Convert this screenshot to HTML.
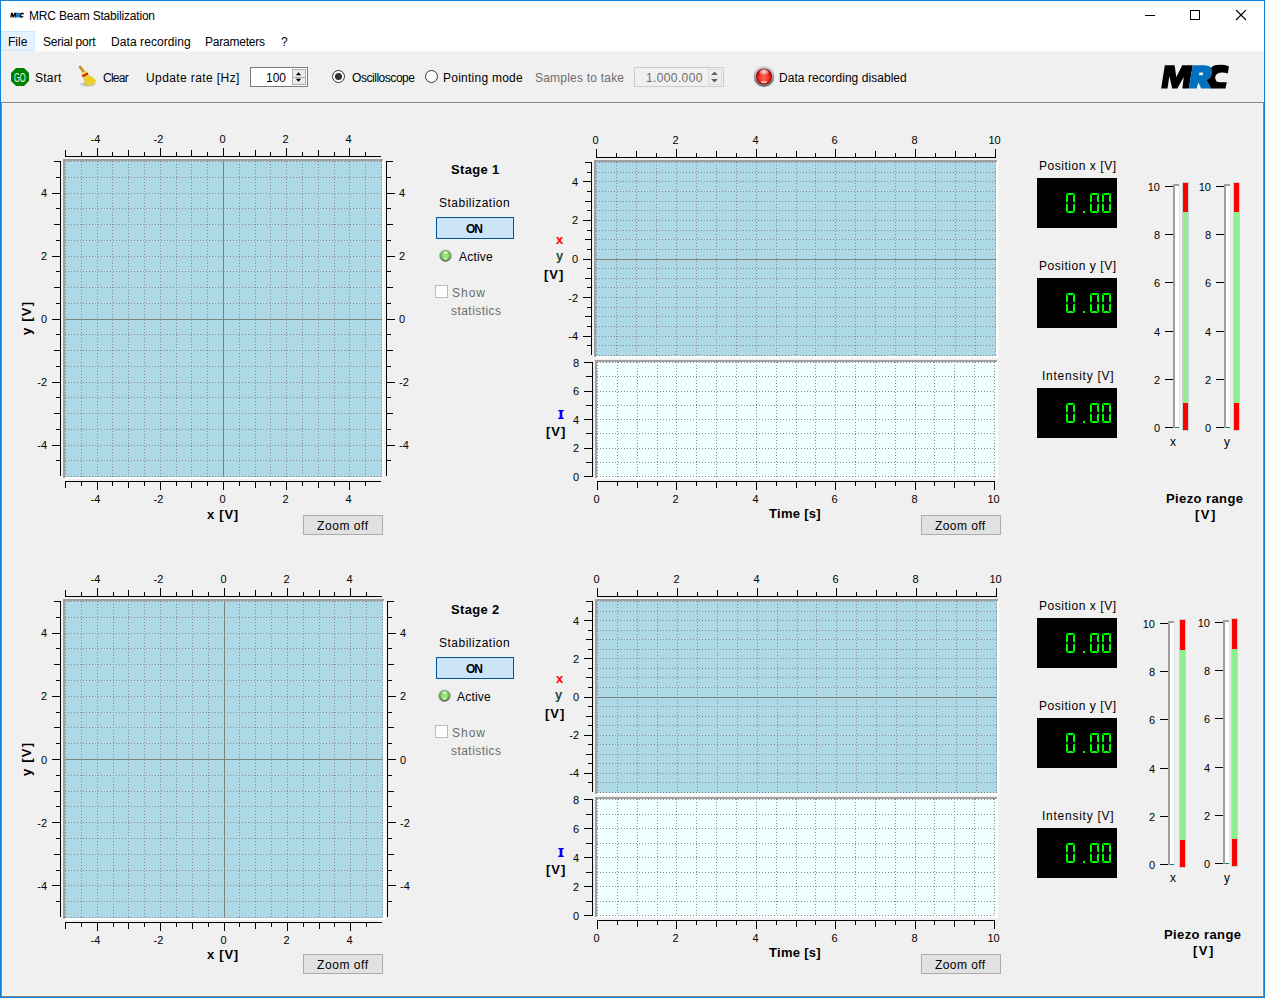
<!DOCTYPE html>
<html><head><meta charset="utf-8"><title>MRC Beam Stabilization</title>
<style>
html,body{margin:0;padding:0;background:#f0f0f0;overflow:hidden;}
svg{display:block;font-family:"Liberation Sans", sans-serif;}
rect{shape-rendering:crispEdges;}
line{shape-rendering:crispEdges;}
</style></head><body>
<svg width="1265" height="998" viewBox="0 0 1265 998">
<defs><radialGradient id="gred" cx="50%" cy="60%" r="55%"><stop offset="0" stop-color="#ff6a5a"/><stop offset="0.7" stop-color="#ee2a1a"/><stop offset="1" stop-color="#b00000"/></radialGradient><radialGradient id="ghi" cx="50%" cy="40%" r="60%"><stop offset="0" stop-color="#ffffff" stop-opacity="0.95"/><stop offset="1" stop-color="#ffffff" stop-opacity="0.1"/></radialGradient><linearGradient id="gbez" x1="0" y1="0" x2="0" y2="1"><stop offset="0" stop-color="#d8d8d8"/><stop offset="1" stop-color="#6e6e6e"/></linearGradient><linearGradient id="gbez2" x1="0" y1="0" x2="0" y2="1"><stop offset="0" stop-color="#e6e6e6"/><stop offset="0.5" stop-color="#b0b0b0"/><stop offset="1" stop-color="#5e5e5e"/></linearGradient><radialGradient id="gled" cx="50%" cy="55%" r="55%"><stop offset="0" stop-color="#a6e68c"/><stop offset="0.7" stop-color="#86dc5e"/><stop offset="1" stop-color="#5cb83a"/></radialGradient><radialGradient id="gshadow" cx="50%" cy="50%" r="50%"><stop offset="0" stop-color="#8a8a8a"/><stop offset="1" stop-color="#8a8a8a" stop-opacity="0"/></radialGradient></defs>
<rect x="0" y="0" width="1265" height="998" fill="#1081dc" />
<rect x="1" y="1" width="1263" height="996" fill="#f0f0f0" />
<rect x="1" y="1" width="1263" height="50" fill="#ffffff" />
<rect x="1" y="51" width="1263" height="1" fill="#f4f4f4" />
<g transform="translate(10,12.5) scale(0.2)"><path d="M1.2,24.6 L4.8,1.2 L14.6,1.2 L16.3,12.9 L22.3,1.2 L32.8,1.2 L28.8,24.6 L22.3,24.6 L23.8,12.9 L17.3,24.6 L12.2,24.6 L9.4,11.9 L7.5,24.6 Z" fill="#000"/><path d="M28.8,24.6 L32.8,1.2 L44,1.2 Q49.5,1.2 51,3.7 Q52.6,7.5 51,12.2 Q49.5,15 46.5,15.7 L51,24.6 L41.2,24.6 L38.3,18.2 L36.7,24.6 Z M39.3,8.4 L43.1,8.4 L42.8,11.3 L39,11.3 Z" fill="#0070c0" fill-rule="evenodd"/><path d="M51,3.7 Q53,1.2 56.5,1 L62,0.7 Q66,0.8 69,2.4 L67.7,9.4 Q65,8.3 62,8.4 Q57.5,8.6 56,11 Q55,12.5 55.2,14.2 Q55.6,17.3 58,18 Q60,18.3 66.8,18.2 L65.5,24.6 L51,24.6 L46.5,15.7 Q49.5,15 51,12.2 Q52.6,7.5 51,3.7 Z" fill="#000"/></g>
<text x="29" y="20" font-size="12" fill="#000" textLength="126.06" lengthAdjust="spacing" >MRC Beam Stabilization</text>
<rect x="1145" y="15" width="10" height="1" fill="#000" />
<rect x="1190.5" y="10.5" width="9" height="9" fill="none" stroke="#000" stroke-width="1"/>
<path d="M1236,10 L1246,20 M1246,10 L1236,20" stroke="#000" stroke-width="1.1" fill="none"/>
<rect x="1" y="31" width="34" height="20" fill="#cce8ff" />
<rect x="2" y="32" width="32" height="18" fill="#e5f3ff" />
<text x="8" y="46" font-size="12" fill="#000" textLength="19.34" lengthAdjust="spacing" >File</text>
<text x="43" y="46" font-size="12" fill="#000" textLength="52.70" lengthAdjust="spacing" >Serial port</text>
<text x="111" y="46" font-size="12" fill="#000" textLength="79.72" lengthAdjust="spacing" >Data recording</text>
<text x="205" y="46" font-size="12" fill="#000" textLength="60.03" lengthAdjust="spacing" >Parameters</text>
<text x="281" y="46" font-size="12" fill="#000" textLength="4.69" lengthAdjust="spacing" >?</text>
<rect x="1" y="102" width="1263" height="1" fill="#7f858c" />
<rect x="1" y="102" width="1" height="895" fill="#7f858c" />
<rect x="2" y="103" width="1261" height="1" fill="#f8f8f8" />
<rect x="2" y="103" width="1" height="893" fill="#f8f8f8" />
<rect x="1263" y="102" width="1" height="895" fill="#7f858c" />
<rect x="1262" y="103" width="1" height="893" fill="#f8f8f8" />
<rect x="1" y="996" width="1263" height="1" fill="#7f858c" />
<rect x="2" y="995" width="1261" height="1" fill="#f8f8f8" />
<polygon points="16,68 24,68 29,73 29,81 24,86 16,86 11,81 11,73" fill="#008000"/>
<text x="0" y="0" font-size="13.5" fill="#e8f8e8" text-anchor="middle" transform="translate(19.8,82) scale(0.56,1)">GO</text>
<text x="35" y="82" font-size="12" fill="#000" textLength="26.34" lengthAdjust="spacing" >Start</text>
<ellipse cx="88" cy="84.3" rx="9" ry="2.8" fill="url(#gshadow)"/><path d="M78.6,67.2 Q79,65.4 80.8,65.8 L85.2,71.6 L83.2,73.2 Z" fill="#c98a2e"/><ellipse cx="84.3" cy="73.4" rx="3.6" ry="1.7" transform="rotate(-28 84.3 73.4)" fill="#f2dc48"/><path d="M81.8,75.6 L87.4,72.6 L88.6,74.6 L83,77.6 Z" fill="#d41a1a"/><path d="M83,77.4 L88.6,74.6 Q93,77.5 96.4,80.6 Q95.5,82.6 94.4,83.4 Q90,85.4 86.6,86 Q85,83 83,77.4 Z" fill="#f0d22c"/><path d="M85,79 L88,85 M87,78 L91,84.5 M89,77 L94,82.5" stroke="#e2b820" stroke-width="0.6" fill="none"/>
<text x="103" y="82" font-size="12" fill="#000" textLength="25.69" lengthAdjust="spacing" >Clear</text>
<text x="146" y="82" font-size="12" fill="#000" textLength="93.38" lengthAdjust="spacing" >Update rate [Hz]</text>
<rect x="250" y="67" width="58" height="20" fill="#7a7a7a" />
<rect x="251" y="68" width="56" height="18" fill="#ffffff" />
<text x="266" y="82" font-size="12" fill="#000" textLength="20.03" lengthAdjust="spacing" >100</text>
<rect x="292" y="69" width="14" height="16" fill="#adadad" />
<rect x="293" y="70" width="12" height="7" fill="#ececec" />
<rect x="293" y="78" width="12" height="6" fill="#ececec" />
<polygon points="295.8,75.2 301.2,75.2 298.5,72.2" fill="#000"/>
<polygon points="295.8,78.8 301.2,78.8 298.5,81.8" fill="#000"/>
<circle cx="338.5" cy="76.5" r="6" fill="#fff" stroke="#333" stroke-width="1"/>
<circle cx="338.5" cy="76.5" r="3.5" fill="#333"/>
<text x="352" y="82" font-size="12" fill="#000" textLength="63.03" lengthAdjust="spacing" >Oscilloscope</text>
<circle cx="431.5" cy="76.5" r="6" fill="#fff" stroke="#333" stroke-width="1"/>
<text x="443" y="82" font-size="12" fill="#000" textLength="79.72" lengthAdjust="spacing" >Pointing mode</text>
<text x="535" y="82" font-size="12" fill="#6d6d6d" textLength="89.05" lengthAdjust="spacing" >Samples to take</text>
<rect x="634" y="67" width="90" height="20" fill="#cccccc" />
<rect x="635" y="68" width="88" height="18" fill="#f0f0f0" />
<text x="646" y="82" font-size="12" fill="#6d6d6d" textLength="56.39" lengthAdjust="spacing" >1.000.000</text>
<rect x="708" y="69" width="14" height="16" fill="#dcdcdc" />
<rect x="709" y="70" width="12" height="7" fill="#f0f0f0" />
<rect x="709" y="78" width="12" height="6" fill="#f0f0f0" />
<polygon points="714.5,71.5 718,75 711,75" fill="#606060"/>
<polygon points="711,79 718,79 714.5,82.5" fill="#606060"/>
<circle cx="764" cy="76.5" r="10.5" fill="url(#gbez)"/>
<circle cx="764" cy="76.5" r="8" fill="#8b0000"/>
<circle cx="764" cy="76.5" r="7.2" fill="url(#gred)"/>
<ellipse cx="764" cy="72.2" rx="5" ry="3.2" fill="url(#ghi)"/>
<ellipse cx="764" cy="82" rx="3.2" ry="1.3" fill="#ffd8c8" opacity="0.75"/>
<text x="779" y="82" font-size="12" fill="#000" textLength="127.75" lengthAdjust="spacing" >Data recording disabled</text>
<g transform="translate(1160,64)"><path d="M1.2,24.6 L4.8,1.2 L14.6,1.2 L16.3,12.9 L22.3,1.2 L32.8,1.2 L28.8,24.6 L22.3,24.6 L23.8,12.9 L17.3,24.6 L12.2,24.6 L9.4,11.9 L7.5,24.6 Z" fill="#000"/><path d="M28.8,24.6 L32.8,1.2 L44,1.2 Q49.5,1.2 51,3.7 Q52.6,7.5 51,12.2 Q49.5,15 46.5,15.7 L51,24.6 L41.2,24.6 L38.3,18.2 L36.7,24.6 Z M39.3,8.4 L43.1,8.4 L42.8,11.3 L39,11.3 Z" fill="#0070c0" fill-rule="evenodd"/><path d="M51,3.7 Q53,1.2 56.5,1 L62,0.7 Q66,0.8 69,2.4 L67.7,9.4 Q65,8.3 62,8.4 Q57.5,8.6 56,11 Q55,12.5 55.2,14.2 Q55.6,17.3 58,18 Q60,18.3 66.8,18.2 L65.5,24.6 L51,24.6 L46.5,15.7 Q49.5,15 51,12.2 Q52.6,7.5 51,3.7 Z" fill="#000"/></g>
<rect x="63" y="159" width="321" height="320" fill="#ffffff" />
<rect x="63" y="159" width="320" height="2" fill="#a0a0a0" />
<rect x="63" y="159" width="2" height="319" fill="#a0a0a0" />
<rect x="65" y="161" width="317" height="316" fill="#add8e6" />
<line x1="65.5" y1="161" x2="65.5" y2="477" stroke="#8e8989" stroke-width="1" stroke-dasharray="1 2"/>
<line x1="81.5" y1="161" x2="81.5" y2="477" stroke="#8e8989" stroke-width="1" stroke-dasharray="1 2"/>
<line x1="97.5" y1="161" x2="97.5" y2="477" stroke="#8e8989" stroke-width="1" stroke-dasharray="1 2"/>
<line x1="112.5" y1="161" x2="112.5" y2="477" stroke="#8e8989" stroke-width="1" stroke-dasharray="1 2"/>
<line x1="128.5" y1="161" x2="128.5" y2="477" stroke="#8e8989" stroke-width="1" stroke-dasharray="1 2"/>
<line x1="144.5" y1="161" x2="144.5" y2="477" stroke="#8e8989" stroke-width="1" stroke-dasharray="1 2"/>
<line x1="160.5" y1="161" x2="160.5" y2="477" stroke="#8e8989" stroke-width="1" stroke-dasharray="1 2"/>
<line x1="176.5" y1="161" x2="176.5" y2="477" stroke="#8e8989" stroke-width="1" stroke-dasharray="1 2"/>
<line x1="191.5" y1="161" x2="191.5" y2="477" stroke="#8e8989" stroke-width="1" stroke-dasharray="1 2"/>
<line x1="207.5" y1="161" x2="207.5" y2="477" stroke="#8e8989" stroke-width="1" stroke-dasharray="1 2"/>
<line x1="223.5" y1="161" x2="223.5" y2="477" stroke="#8e8989" stroke-width="1" stroke-dasharray="1 2"/>
<line x1="239.5" y1="161" x2="239.5" y2="477" stroke="#8e8989" stroke-width="1" stroke-dasharray="1 2"/>
<line x1="255.5" y1="161" x2="255.5" y2="477" stroke="#8e8989" stroke-width="1" stroke-dasharray="1 2"/>
<line x1="270.5" y1="161" x2="270.5" y2="477" stroke="#8e8989" stroke-width="1" stroke-dasharray="1 2"/>
<line x1="286.5" y1="161" x2="286.5" y2="477" stroke="#8e8989" stroke-width="1" stroke-dasharray="1 2"/>
<line x1="302.5" y1="161" x2="302.5" y2="477" stroke="#8e8989" stroke-width="1" stroke-dasharray="1 2"/>
<line x1="318.5" y1="161" x2="318.5" y2="477" stroke="#8e8989" stroke-width="1" stroke-dasharray="1 2"/>
<line x1="334.5" y1="161" x2="334.5" y2="477" stroke="#8e8989" stroke-width="1" stroke-dasharray="1 2"/>
<line x1="349.5" y1="161" x2="349.5" y2="477" stroke="#8e8989" stroke-width="1" stroke-dasharray="1 2"/>
<line x1="365.5" y1="161" x2="365.5" y2="477" stroke="#8e8989" stroke-width="1" stroke-dasharray="1 2"/>
<line x1="381.5" y1="161" x2="381.5" y2="477" stroke="#8e8989" stroke-width="1" stroke-dasharray="1 2"/>
<line x1="65" y1="476.5" x2="382" y2="476.5" stroke="#8e8989" stroke-width="1" stroke-dasharray="1 2"/>
<line x1="65" y1="460.5" x2="382" y2="460.5" stroke="#8e8989" stroke-width="1" stroke-dasharray="1 2"/>
<line x1="65" y1="445.5" x2="382" y2="445.5" stroke="#8e8989" stroke-width="1" stroke-dasharray="1 2"/>
<line x1="65" y1="429.5" x2="382" y2="429.5" stroke="#8e8989" stroke-width="1" stroke-dasharray="1 2"/>
<line x1="65" y1="413.5" x2="382" y2="413.5" stroke="#8e8989" stroke-width="1" stroke-dasharray="1 2"/>
<line x1="65" y1="397.5" x2="382" y2="397.5" stroke="#8e8989" stroke-width="1" stroke-dasharray="1 2"/>
<line x1="65" y1="382.5" x2="382" y2="382.5" stroke="#8e8989" stroke-width="1" stroke-dasharray="1 2"/>
<line x1="65" y1="366.5" x2="382" y2="366.5" stroke="#8e8989" stroke-width="1" stroke-dasharray="1 2"/>
<line x1="65" y1="350.5" x2="382" y2="350.5" stroke="#8e8989" stroke-width="1" stroke-dasharray="1 2"/>
<line x1="65" y1="334.5" x2="382" y2="334.5" stroke="#8e8989" stroke-width="1" stroke-dasharray="1 2"/>
<line x1="65" y1="319.5" x2="382" y2="319.5" stroke="#8e8989" stroke-width="1" stroke-dasharray="1 2"/>
<line x1="65" y1="303.5" x2="382" y2="303.5" stroke="#8e8989" stroke-width="1" stroke-dasharray="1 2"/>
<line x1="65" y1="287.5" x2="382" y2="287.5" stroke="#8e8989" stroke-width="1" stroke-dasharray="1 2"/>
<line x1="65" y1="271.5" x2="382" y2="271.5" stroke="#8e8989" stroke-width="1" stroke-dasharray="1 2"/>
<line x1="65" y1="256.5" x2="382" y2="256.5" stroke="#8e8989" stroke-width="1" stroke-dasharray="1 2"/>
<line x1="65" y1="240.5" x2="382" y2="240.5" stroke="#8e8989" stroke-width="1" stroke-dasharray="1 2"/>
<line x1="65" y1="224.5" x2="382" y2="224.5" stroke="#8e8989" stroke-width="1" stroke-dasharray="1 2"/>
<line x1="65" y1="208.5" x2="382" y2="208.5" stroke="#8e8989" stroke-width="1" stroke-dasharray="1 2"/>
<line x1="65" y1="193.5" x2="382" y2="193.5" stroke="#8e8989" stroke-width="1" stroke-dasharray="1 2"/>
<line x1="65" y1="177.5" x2="382" y2="177.5" stroke="#8e8989" stroke-width="1" stroke-dasharray="1 2"/>
<line x1="65" y1="161.5" x2="382" y2="161.5" stroke="#8e8989" stroke-width="1" stroke-dasharray="1 2"/>
<rect x="223" y="161" width="1" height="316" fill="#808080" />
<rect x="65" y="319" width="317" height="1" fill="#808080" />
<rect x="65" y="156" width="316" height="1" fill="#000" />
<rect x="65" y="150" width="1" height="6" fill="#000" />
<rect x="81" y="152" width="1" height="4" fill="#000" />
<rect x="97" y="148" width="1" height="8" fill="#000" />
<rect x="112" y="152" width="1" height="4" fill="#000" />
<rect x="128" y="150" width="1" height="6" fill="#000" />
<rect x="144" y="152" width="1" height="4" fill="#000" />
<rect x="160" y="148" width="1" height="8" fill="#000" />
<rect x="176" y="152" width="1" height="4" fill="#000" />
<rect x="191" y="150" width="1" height="6" fill="#000" />
<rect x="207" y="152" width="1" height="4" fill="#000" />
<rect x="223" y="148" width="1" height="8" fill="#000" />
<rect x="239" y="152" width="1" height="4" fill="#000" />
<rect x="255" y="150" width="1" height="6" fill="#000" />
<rect x="270" y="152" width="1" height="4" fill="#000" />
<rect x="286" y="148" width="1" height="8" fill="#000" />
<rect x="302" y="152" width="1" height="4" fill="#000" />
<rect x="318" y="150" width="1" height="6" fill="#000" />
<rect x="334" y="152" width="1" height="4" fill="#000" />
<rect x="349" y="148" width="1" height="8" fill="#000" />
<rect x="365" y="152" width="1" height="4" fill="#000" />
<text x="95.5" y="143" font-size="11" text-anchor="middle" fill="#000" >-4</text>
<text x="158.5" y="143" font-size="11" text-anchor="middle" fill="#000" >-2</text>
<text x="222.5" y="143" font-size="11" text-anchor="middle" fill="#000" >0</text>
<text x="285.5" y="143" font-size="11" text-anchor="middle" fill="#000" >2</text>
<text x="348.5" y="143" font-size="11" text-anchor="middle" fill="#000" >4</text>
<rect x="60" y="161" width="1" height="315" fill="#000" />
<rect x="56" y="460" width="4" height="1" fill="#000" />
<rect x="52" y="445" width="8" height="1" fill="#000" />
<rect x="56" y="429" width="4" height="1" fill="#000" />
<rect x="54" y="413" width="6" height="1" fill="#000" />
<rect x="56" y="397" width="4" height="1" fill="#000" />
<rect x="52" y="382" width="8" height="1" fill="#000" />
<rect x="56" y="366" width="4" height="1" fill="#000" />
<rect x="54" y="350" width="6" height="1" fill="#000" />
<rect x="56" y="334" width="4" height="1" fill="#000" />
<rect x="52" y="319" width="8" height="1" fill="#000" />
<rect x="56" y="303" width="4" height="1" fill="#000" />
<rect x="54" y="287" width="6" height="1" fill="#000" />
<rect x="56" y="271" width="4" height="1" fill="#000" />
<rect x="52" y="256" width="8" height="1" fill="#000" />
<rect x="56" y="240" width="4" height="1" fill="#000" />
<rect x="54" y="224" width="6" height="1" fill="#000" />
<rect x="56" y="208" width="4" height="1" fill="#000" />
<rect x="52" y="193" width="8" height="1" fill="#000" />
<rect x="56" y="177" width="4" height="1" fill="#000" />
<rect x="54" y="161" width="6" height="1" fill="#000" />
<text x="47" y="449" font-size="11" text-anchor="end" fill="#000" >-4</text>
<text x="47" y="386" font-size="11" text-anchor="end" fill="#000" >-2</text>
<text x="47" y="323" font-size="11" text-anchor="end" fill="#000" >0</text>
<text x="47" y="260" font-size="11" text-anchor="end" fill="#000" >2</text>
<text x="47" y="197" font-size="11" text-anchor="end" fill="#000" >4</text>
<rect x="65" y="481" width="316" height="1" fill="#000" />
<rect x="65" y="482" width="1" height="6" fill="#000" />
<rect x="81" y="482" width="1" height="4" fill="#000" />
<rect x="97" y="482" width="1" height="8" fill="#000" />
<rect x="112" y="482" width="1" height="4" fill="#000" />
<rect x="128" y="482" width="1" height="6" fill="#000" />
<rect x="144" y="482" width="1" height="4" fill="#000" />
<rect x="160" y="482" width="1" height="8" fill="#000" />
<rect x="176" y="482" width="1" height="4" fill="#000" />
<rect x="191" y="482" width="1" height="6" fill="#000" />
<rect x="207" y="482" width="1" height="4" fill="#000" />
<rect x="223" y="482" width="1" height="8" fill="#000" />
<rect x="239" y="482" width="1" height="4" fill="#000" />
<rect x="255" y="482" width="1" height="6" fill="#000" />
<rect x="270" y="482" width="1" height="4" fill="#000" />
<rect x="286" y="482" width="1" height="8" fill="#000" />
<rect x="302" y="482" width="1" height="4" fill="#000" />
<rect x="318" y="482" width="1" height="6" fill="#000" />
<rect x="334" y="482" width="1" height="4" fill="#000" />
<rect x="349" y="482" width="1" height="8" fill="#000" />
<rect x="365" y="482" width="1" height="4" fill="#000" />
<text x="95.5" y="503" font-size="11" text-anchor="middle" fill="#000" >-4</text>
<text x="158.5" y="503" font-size="11" text-anchor="middle" fill="#000" >-2</text>
<text x="222.5" y="503" font-size="11" text-anchor="middle" fill="#000" >0</text>
<text x="285.5" y="503" font-size="11" text-anchor="middle" fill="#000" >2</text>
<text x="348.5" y="503" font-size="11" text-anchor="middle" fill="#000" >4</text>
<rect x="386" y="161" width="1" height="315" fill="#000" />
<rect x="387" y="460" width="4" height="1" fill="#000" />
<rect x="387" y="445" width="8" height="1" fill="#000" />
<rect x="387" y="429" width="4" height="1" fill="#000" />
<rect x="387" y="413" width="6" height="1" fill="#000" />
<rect x="387" y="397" width="4" height="1" fill="#000" />
<rect x="387" y="382" width="8" height="1" fill="#000" />
<rect x="387" y="366" width="4" height="1" fill="#000" />
<rect x="387" y="350" width="6" height="1" fill="#000" />
<rect x="387" y="334" width="4" height="1" fill="#000" />
<rect x="387" y="319" width="8" height="1" fill="#000" />
<rect x="387" y="303" width="4" height="1" fill="#000" />
<rect x="387" y="287" width="6" height="1" fill="#000" />
<rect x="387" y="271" width="4" height="1" fill="#000" />
<rect x="387" y="256" width="8" height="1" fill="#000" />
<rect x="387" y="240" width="4" height="1" fill="#000" />
<rect x="387" y="224" width="6" height="1" fill="#000" />
<rect x="387" y="208" width="4" height="1" fill="#000" />
<rect x="387" y="193" width="8" height="1" fill="#000" />
<rect x="387" y="177" width="4" height="1" fill="#000" />
<rect x="387" y="161" width="6" height="1" fill="#000" />
<text x="399" y="449" font-size="11" fill="#000" >-4</text>
<text x="399" y="386" font-size="11" fill="#000" >-2</text>
<text x="399" y="323" font-size="11" fill="#000" >0</text>
<text x="399" y="260" font-size="11" fill="#000" >2</text>
<text x="399" y="197" font-size="11" fill="#000" >4</text>
<text x="207" y="519" font-size="13" font-weight="bold" fill="#000" textLength="31.17" lengthAdjust="spacing" >x [V]</text>
<rect x="303" y="515" width="80" height="20" fill="#adadad" />
<rect x="304" y="516" width="78" height="18" fill="#e1e1e1" />
<text x="317" y="530" font-size="12" fill="#000" textLength="51.14" lengthAdjust="spacing" >Zoom off</text>
<rect x="921" y="515" width="80" height="20" fill="#adadad" />
<rect x="922" y="516" width="78" height="18" fill="#e1e1e1" />
<text x="935" y="530" font-size="12" fill="#000" textLength="50.14" lengthAdjust="spacing" >Zoom off</text>
<rect x="594" y="160" width="404" height="198" fill="#ffffff" />
<rect x="594" y="160" width="403" height="2" fill="#a0a0a0" />
<rect x="594" y="160" width="2" height="197" fill="#a0a0a0" />
<rect x="596" y="162" width="400" height="194" fill="#add8e6" />
<line x1="596.5" y1="162" x2="596.5" y2="356" stroke="#8e8989" stroke-width="1" stroke-dasharray="1 2"/>
<line x1="616.5" y1="162" x2="616.5" y2="356" stroke="#8e8989" stroke-width="1" stroke-dasharray="1 2"/>
<line x1="636.5" y1="162" x2="636.5" y2="356" stroke="#8e8989" stroke-width="1" stroke-dasharray="1 2"/>
<line x1="656.5" y1="162" x2="656.5" y2="356" stroke="#8e8989" stroke-width="1" stroke-dasharray="1 2"/>
<line x1="676.5" y1="162" x2="676.5" y2="356" stroke="#8e8989" stroke-width="1" stroke-dasharray="1 2"/>
<line x1="696.5" y1="162" x2="696.5" y2="356" stroke="#8e8989" stroke-width="1" stroke-dasharray="1 2"/>
<line x1="716.5" y1="162" x2="716.5" y2="356" stroke="#8e8989" stroke-width="1" stroke-dasharray="1 2"/>
<line x1="736.5" y1="162" x2="736.5" y2="356" stroke="#8e8989" stroke-width="1" stroke-dasharray="1 2"/>
<line x1="756.5" y1="162" x2="756.5" y2="356" stroke="#8e8989" stroke-width="1" stroke-dasharray="1 2"/>
<line x1="776.5" y1="162" x2="776.5" y2="356" stroke="#8e8989" stroke-width="1" stroke-dasharray="1 2"/>
<line x1="796.5" y1="162" x2="796.5" y2="356" stroke="#8e8989" stroke-width="1" stroke-dasharray="1 2"/>
<line x1="815.5" y1="162" x2="815.5" y2="356" stroke="#8e8989" stroke-width="1" stroke-dasharray="1 2"/>
<line x1="835.5" y1="162" x2="835.5" y2="356" stroke="#8e8989" stroke-width="1" stroke-dasharray="1 2"/>
<line x1="855.5" y1="162" x2="855.5" y2="356" stroke="#8e8989" stroke-width="1" stroke-dasharray="1 2"/>
<line x1="875.5" y1="162" x2="875.5" y2="356" stroke="#8e8989" stroke-width="1" stroke-dasharray="1 2"/>
<line x1="895.5" y1="162" x2="895.5" y2="356" stroke="#8e8989" stroke-width="1" stroke-dasharray="1 2"/>
<line x1="915.5" y1="162" x2="915.5" y2="356" stroke="#8e8989" stroke-width="1" stroke-dasharray="1 2"/>
<line x1="935.5" y1="162" x2="935.5" y2="356" stroke="#8e8989" stroke-width="1" stroke-dasharray="1 2"/>
<line x1="955.5" y1="162" x2="955.5" y2="356" stroke="#8e8989" stroke-width="1" stroke-dasharray="1 2"/>
<line x1="975.5" y1="162" x2="975.5" y2="356" stroke="#8e8989" stroke-width="1" stroke-dasharray="1 2"/>
<line x1="995.5" y1="162" x2="995.5" y2="356" stroke="#8e8989" stroke-width="1" stroke-dasharray="1 2"/>
<line x1="596" y1="355.5" x2="996" y2="355.5" stroke="#8e8989" stroke-width="1" stroke-dasharray="1 2"/>
<line x1="596" y1="345.5" x2="996" y2="345.5" stroke="#8e8989" stroke-width="1" stroke-dasharray="1 2"/>
<line x1="596" y1="336.5" x2="996" y2="336.5" stroke="#8e8989" stroke-width="1" stroke-dasharray="1 2"/>
<line x1="596" y1="326.5" x2="996" y2="326.5" stroke="#8e8989" stroke-width="1" stroke-dasharray="1 2"/>
<line x1="596" y1="316.5" x2="996" y2="316.5" stroke="#8e8989" stroke-width="1" stroke-dasharray="1 2"/>
<line x1="596" y1="307.5" x2="996" y2="307.5" stroke="#8e8989" stroke-width="1" stroke-dasharray="1 2"/>
<line x1="596" y1="297.5" x2="996" y2="297.5" stroke="#8e8989" stroke-width="1" stroke-dasharray="1 2"/>
<line x1="596" y1="287.5" x2="996" y2="287.5" stroke="#8e8989" stroke-width="1" stroke-dasharray="1 2"/>
<line x1="596" y1="278.5" x2="996" y2="278.5" stroke="#8e8989" stroke-width="1" stroke-dasharray="1 2"/>
<line x1="596" y1="268.5" x2="996" y2="268.5" stroke="#8e8989" stroke-width="1" stroke-dasharray="1 2"/>
<line x1="596" y1="259.5" x2="996" y2="259.5" stroke="#8e8989" stroke-width="1" stroke-dasharray="1 2"/>
<line x1="596" y1="249.5" x2="996" y2="249.5" stroke="#8e8989" stroke-width="1" stroke-dasharray="1 2"/>
<line x1="596" y1="239.5" x2="996" y2="239.5" stroke="#8e8989" stroke-width="1" stroke-dasharray="1 2"/>
<line x1="596" y1="230.5" x2="996" y2="230.5" stroke="#8e8989" stroke-width="1" stroke-dasharray="1 2"/>
<line x1="596" y1="220.5" x2="996" y2="220.5" stroke="#8e8989" stroke-width="1" stroke-dasharray="1 2"/>
<line x1="596" y1="210.5" x2="996" y2="210.5" stroke="#8e8989" stroke-width="1" stroke-dasharray="1 2"/>
<line x1="596" y1="201.5" x2="996" y2="201.5" stroke="#8e8989" stroke-width="1" stroke-dasharray="1 2"/>
<line x1="596" y1="191.5" x2="996" y2="191.5" stroke="#8e8989" stroke-width="1" stroke-dasharray="1 2"/>
<line x1="596" y1="181.5" x2="996" y2="181.5" stroke="#8e8989" stroke-width="1" stroke-dasharray="1 2"/>
<line x1="596" y1="172.5" x2="996" y2="172.5" stroke="#8e8989" stroke-width="1" stroke-dasharray="1 2"/>
<line x1="596" y1="162.5" x2="996" y2="162.5" stroke="#8e8989" stroke-width="1" stroke-dasharray="1 2"/>
<rect x="596" y="259" width="400" height="1" fill="#808080" />
<rect x="596" y="157" width="400" height="1" fill="#000" />
<rect x="596" y="149" width="1" height="8" fill="#000" />
<rect x="616" y="153" width="1" height="4" fill="#000" />
<rect x="636" y="151" width="1" height="6" fill="#000" />
<rect x="656" y="153" width="1" height="4" fill="#000" />
<rect x="676" y="149" width="1" height="8" fill="#000" />
<rect x="696" y="153" width="1" height="4" fill="#000" />
<rect x="716" y="151" width="1" height="6" fill="#000" />
<rect x="736" y="153" width="1" height="4" fill="#000" />
<rect x="756" y="149" width="1" height="8" fill="#000" />
<rect x="776" y="153" width="1" height="4" fill="#000" />
<rect x="796" y="151" width="1" height="6" fill="#000" />
<rect x="815" y="153" width="1" height="4" fill="#000" />
<rect x="835" y="149" width="1" height="8" fill="#000" />
<rect x="855" y="153" width="1" height="4" fill="#000" />
<rect x="875" y="151" width="1" height="6" fill="#000" />
<rect x="895" y="153" width="1" height="4" fill="#000" />
<rect x="915" y="149" width="1" height="8" fill="#000" />
<rect x="935" y="153" width="1" height="4" fill="#000" />
<rect x="955" y="151" width="1" height="6" fill="#000" />
<rect x="975" y="153" width="1" height="4" fill="#000" />
<rect x="995" y="149" width="1" height="8" fill="#000" />
<text x="595.5" y="144" font-size="11" text-anchor="middle" fill="#000" >0</text>
<text x="675.5" y="144" font-size="11" text-anchor="middle" fill="#000" >2</text>
<text x="755.5" y="144" font-size="11" text-anchor="middle" fill="#000" >4</text>
<text x="834.5" y="144" font-size="11" text-anchor="middle" fill="#000" >6</text>
<text x="914.5" y="144" font-size="11" text-anchor="middle" fill="#000" >8</text>
<text x="994.5" y="144" font-size="11" text-anchor="middle" fill="#000" >10</text>
<rect x="591" y="162" width="1" height="193" fill="#000" />
<rect x="587" y="345" width="4" height="1" fill="#000" />
<rect x="583" y="336" width="8" height="1" fill="#000" />
<rect x="587" y="326" width="4" height="1" fill="#000" />
<rect x="585" y="316" width="6" height="1" fill="#000" />
<rect x="587" y="307" width="4" height="1" fill="#000" />
<rect x="583" y="297" width="8" height="1" fill="#000" />
<rect x="587" y="287" width="4" height="1" fill="#000" />
<rect x="585" y="278" width="6" height="1" fill="#000" />
<rect x="587" y="268" width="4" height="1" fill="#000" />
<rect x="583" y="259" width="8" height="1" fill="#000" />
<rect x="587" y="249" width="4" height="1" fill="#000" />
<rect x="585" y="239" width="6" height="1" fill="#000" />
<rect x="587" y="230" width="4" height="1" fill="#000" />
<rect x="583" y="220" width="8" height="1" fill="#000" />
<rect x="587" y="210" width="4" height="1" fill="#000" />
<rect x="585" y="201" width="6" height="1" fill="#000" />
<rect x="587" y="191" width="4" height="1" fill="#000" />
<rect x="583" y="181" width="8" height="1" fill="#000" />
<rect x="587" y="172" width="4" height="1" fill="#000" />
<rect x="585" y="162" width="6" height="1" fill="#000" />
<text x="578" y="340" font-size="11" text-anchor="end" fill="#000" >-4</text>
<text x="578" y="302" font-size="11" text-anchor="end" fill="#000" >-2</text>
<text x="578" y="263" font-size="11" text-anchor="end" fill="#000" >0</text>
<text x="578" y="224" font-size="11" text-anchor="end" fill="#000" >2</text>
<text x="578" y="186" font-size="11" text-anchor="end" fill="#000" >4</text>
<rect x="595" y="360" width="403" height="119" fill="#ffffff" />
<rect x="595" y="360" width="402" height="2" fill="#a0a0a0" />
<rect x="595" y="360" width="2" height="118" fill="#a0a0a0" />
<rect x="597" y="362" width="399" height="115" fill="#f0ffff" />
<line x1="597.5" y1="362" x2="597.5" y2="477" stroke="#8e8989" stroke-width="1" stroke-dasharray="1 2"/>
<line x1="617.5" y1="362" x2="617.5" y2="477" stroke="#8e8989" stroke-width="1" stroke-dasharray="1 2"/>
<line x1="637.5" y1="362" x2="637.5" y2="477" stroke="#8e8989" stroke-width="1" stroke-dasharray="1 2"/>
<line x1="657.5" y1="362" x2="657.5" y2="477" stroke="#8e8989" stroke-width="1" stroke-dasharray="1 2"/>
<line x1="676.5" y1="362" x2="676.5" y2="477" stroke="#8e8989" stroke-width="1" stroke-dasharray="1 2"/>
<line x1="696.5" y1="362" x2="696.5" y2="477" stroke="#8e8989" stroke-width="1" stroke-dasharray="1 2"/>
<line x1="716.5" y1="362" x2="716.5" y2="477" stroke="#8e8989" stroke-width="1" stroke-dasharray="1 2"/>
<line x1="736.5" y1="362" x2="736.5" y2="477" stroke="#8e8989" stroke-width="1" stroke-dasharray="1 2"/>
<line x1="756.5" y1="362" x2="756.5" y2="477" stroke="#8e8989" stroke-width="1" stroke-dasharray="1 2"/>
<line x1="776.5" y1="362" x2="776.5" y2="477" stroke="#8e8989" stroke-width="1" stroke-dasharray="1 2"/>
<line x1="796.5" y1="362" x2="796.5" y2="477" stroke="#8e8989" stroke-width="1" stroke-dasharray="1 2"/>
<line x1="815.5" y1="362" x2="815.5" y2="477" stroke="#8e8989" stroke-width="1" stroke-dasharray="1 2"/>
<line x1="835.5" y1="362" x2="835.5" y2="477" stroke="#8e8989" stroke-width="1" stroke-dasharray="1 2"/>
<line x1="855.5" y1="362" x2="855.5" y2="477" stroke="#8e8989" stroke-width="1" stroke-dasharray="1 2"/>
<line x1="875.5" y1="362" x2="875.5" y2="477" stroke="#8e8989" stroke-width="1" stroke-dasharray="1 2"/>
<line x1="895.5" y1="362" x2="895.5" y2="477" stroke="#8e8989" stroke-width="1" stroke-dasharray="1 2"/>
<line x1="915.5" y1="362" x2="915.5" y2="477" stroke="#8e8989" stroke-width="1" stroke-dasharray="1 2"/>
<line x1="934.5" y1="362" x2="934.5" y2="477" stroke="#8e8989" stroke-width="1" stroke-dasharray="1 2"/>
<line x1="954.5" y1="362" x2="954.5" y2="477" stroke="#8e8989" stroke-width="1" stroke-dasharray="1 2"/>
<line x1="974.5" y1="362" x2="974.5" y2="477" stroke="#8e8989" stroke-width="1" stroke-dasharray="1 2"/>
<line x1="994.5" y1="362" x2="994.5" y2="477" stroke="#8e8989" stroke-width="1" stroke-dasharray="1 2"/>
<line x1="597" y1="476.5" x2="996" y2="476.5" stroke="#8e8989" stroke-width="1" stroke-dasharray="1 2"/>
<line x1="597" y1="462.5" x2="996" y2="462.5" stroke="#8e8989" stroke-width="1" stroke-dasharray="1 2"/>
<line x1="597" y1="448.5" x2="996" y2="448.5" stroke="#8e8989" stroke-width="1" stroke-dasharray="1 2"/>
<line x1="597" y1="433.5" x2="996" y2="433.5" stroke="#8e8989" stroke-width="1" stroke-dasharray="1 2"/>
<line x1="597" y1="419.5" x2="996" y2="419.5" stroke="#8e8989" stroke-width="1" stroke-dasharray="1 2"/>
<line x1="597" y1="405.5" x2="996" y2="405.5" stroke="#8e8989" stroke-width="1" stroke-dasharray="1 2"/>
<line x1="597" y1="391.5" x2="996" y2="391.5" stroke="#8e8989" stroke-width="1" stroke-dasharray="1 2"/>
<line x1="597" y1="376.5" x2="996" y2="376.5" stroke="#8e8989" stroke-width="1" stroke-dasharray="1 2"/>
<line x1="597" y1="362.5" x2="996" y2="362.5" stroke="#8e8989" stroke-width="1" stroke-dasharray="1 2"/>
<rect x="592" y="362" width="1" height="115" fill="#000" />
<rect x="584" y="476" width="8" height="1" fill="#000" />
<rect x="586" y="462" width="6" height="1" fill="#000" />
<rect x="584" y="448" width="8" height="1" fill="#000" />
<rect x="586" y="433" width="6" height="1" fill="#000" />
<rect x="584" y="419" width="8" height="1" fill="#000" />
<rect x="586" y="405" width="6" height="1" fill="#000" />
<rect x="584" y="391" width="8" height="1" fill="#000" />
<rect x="586" y="376" width="6" height="1" fill="#000" />
<rect x="584" y="362" width="8" height="1" fill="#000" />
<text x="579" y="481" font-size="11" text-anchor="end" fill="#000" >0</text>
<text x="579" y="452" font-size="11" text-anchor="end" fill="#000" >2</text>
<text x="579" y="424" font-size="11" text-anchor="end" fill="#000" >4</text>
<text x="579" y="395" font-size="11" text-anchor="end" fill="#000" >6</text>
<text x="579" y="367" font-size="11" text-anchor="end" fill="#000" >8</text>
<rect x="597" y="481" width="398" height="1" fill="#000" />
<rect x="597" y="482" width="1" height="8" fill="#000" />
<rect x="617" y="482" width="1" height="4" fill="#000" />
<rect x="637" y="482" width="1" height="6" fill="#000" />
<rect x="657" y="482" width="1" height="4" fill="#000" />
<rect x="676" y="482" width="1" height="8" fill="#000" />
<rect x="696" y="482" width="1" height="4" fill="#000" />
<rect x="716" y="482" width="1" height="6" fill="#000" />
<rect x="736" y="482" width="1" height="4" fill="#000" />
<rect x="756" y="482" width="1" height="8" fill="#000" />
<rect x="776" y="482" width="1" height="4" fill="#000" />
<rect x="796" y="482" width="1" height="6" fill="#000" />
<rect x="815" y="482" width="1" height="4" fill="#000" />
<rect x="835" y="482" width="1" height="8" fill="#000" />
<rect x="855" y="482" width="1" height="4" fill="#000" />
<rect x="875" y="482" width="1" height="6" fill="#000" />
<rect x="895" y="482" width="1" height="4" fill="#000" />
<rect x="915" y="482" width="1" height="8" fill="#000" />
<rect x="934" y="482" width="1" height="4" fill="#000" />
<rect x="954" y="482" width="1" height="6" fill="#000" />
<rect x="974" y="482" width="1" height="4" fill="#000" />
<rect x="994" y="482" width="1" height="8" fill="#000" />
<text x="596.5" y="503" font-size="11" text-anchor="middle" fill="#000" >0</text>
<text x="675.5" y="503" font-size="11" text-anchor="middle" fill="#000" >2</text>
<text x="755.5" y="503" font-size="11" text-anchor="middle" fill="#000" >4</text>
<text x="834.5" y="503" font-size="11" text-anchor="middle" fill="#000" >6</text>
<text x="914.5" y="503" font-size="11" text-anchor="middle" fill="#000" >8</text>
<text x="993.5" y="503" font-size="11" text-anchor="middle" fill="#000" >10</text>
<text x="769" y="518" font-size="13" font-weight="bold" fill="#000" textLength="51.61" lengthAdjust="spacing" >Time [s]</text>
<text x="556" y="244" font-size="13" font-weight="bold" fill="#ff0000" textLength="7.23" lengthAdjust="spacing" >x</text>
<text x="556" y="260" font-size="13" font-weight="bold" fill="#1f4848" textLength="8.23" lengthAdjust="spacing" >y</text>
<text x="544" y="279" font-size="13" font-weight="bold" fill="#000" textLength="19.34" lengthAdjust="spacing" >[V]</text>
<path d="M558.2,410 H563.8 V411.1 Q562.4,411.2 562.3,412 V417 Q562.4,417.8 563.8,417.9 V419 H558.2 V417.9 Q559.6,417.8 559.7,417 V412 Q559.6,411.2 558.2,411.1 Z" fill="#0000ff"/>
<text x="546" y="436" font-size="13" font-weight="bold" fill="#000" textLength="19.34" lengthAdjust="spacing" >[V]</text>
<text x="451" y="174" font-size="13" font-weight="bold" fill="#000" textLength="48.25" lengthAdjust="spacing" >Stage 1</text>
<text x="439" y="207" font-size="12" fill="#000" textLength="70.72" lengthAdjust="spacing" >Stabilization</text>
<rect x="436" y="217" width="78" height="22" fill="#005499" />
<rect x="437" y="218" width="76" height="20" fill="#cce4f7" />
<text x="466" y="233" font-size="12" font-weight="bold" fill="#000" textLength="17.00" lengthAdjust="spacing" >ON</text>
<circle cx="445.5" cy="255.3" r="6.4" fill="url(#gbez2)"/>
<circle cx="445.5" cy="255.3" r="5.1" fill="#4a9a36"/>
<circle cx="445.5" cy="255.3" r="4.4" fill="url(#gled)"/>
<ellipse cx="445.5" cy="252.70000000000002" rx="3" ry="1.7" fill="url(#ghi)"/>
<ellipse cx="445.5" cy="258.7" rx="2" ry="0.9" fill="#e8ffe0" opacity="0.8"/>
<text x="459" y="261" font-size="12" fill="#000" textLength="33.69" lengthAdjust="spacing" >Active</text>
<rect x="435" y="285" width="13" height="13" fill="#bcbcbc" />
<rect x="436" y="286" width="11" height="11" fill="#ffffff" />
<text x="452" y="297" font-size="12" fill="#6d6d6d" textLength="33.03" lengthAdjust="spacing" >Show</text>
<text x="451" y="315" font-size="12" fill="#6d6d6d" textLength="50.02" lengthAdjust="spacing" >statistics</text>
<text x="1039" y="170" font-size="12" fill="#000" textLength="77.03" lengthAdjust="spacing" >Position x [V]</text>
<rect x="1037" y="178" width="80" height="50" fill="#000" />
<polygon points="1066.45,193 1074.55,193 1072.55,195 1068.45,195" fill="#00ff00"/>
<polygon points="1066.45,213 1074.55,213 1072.55,211 1068.45,211" fill="#00ff00"/>
<polygon points="1066,193.45 1068,195.45 1068,201.4 1066,202.4" fill="#00ff00"/>
<polygon points="1066,203.6 1068,204.6 1068,210.55 1066,212.55" fill="#00ff00"/>
<polygon points="1075,193.45 1073,195.45 1073,201.4 1075,202.4" fill="#00ff00"/>
<polygon points="1075,203.6 1073,204.6 1073,210.55 1075,212.55" fill="#00ff00"/>
<rect x="1083" y="211" width="2" height="2" fill="#00ff00" />
<polygon points="1090.45,193 1098.55,193 1096.55,195 1092.45,195" fill="#00ff00"/>
<polygon points="1090.45,213 1098.55,213 1096.55,211 1092.45,211" fill="#00ff00"/>
<polygon points="1090,193.45 1092,195.45 1092,201.4 1090,202.4" fill="#00ff00"/>
<polygon points="1090,203.6 1092,204.6 1092,210.55 1090,212.55" fill="#00ff00"/>
<polygon points="1099,193.45 1097,195.45 1097,201.4 1099,202.4" fill="#00ff00"/>
<polygon points="1099,203.6 1097,204.6 1097,210.55 1099,212.55" fill="#00ff00"/>
<polygon points="1102.45,193 1110.55,193 1108.55,195 1104.45,195" fill="#00ff00"/>
<polygon points="1102.45,213 1110.55,213 1108.55,211 1104.45,211" fill="#00ff00"/>
<polygon points="1102,193.45 1104,195.45 1104,201.4 1102,202.4" fill="#00ff00"/>
<polygon points="1102,203.6 1104,204.6 1104,210.55 1102,212.55" fill="#00ff00"/>
<polygon points="1111,193.45 1109,195.45 1109,201.4 1111,202.4" fill="#00ff00"/>
<polygon points="1111,203.6 1109,204.6 1109,210.55 1111,212.55" fill="#00ff00"/>
<text x="1039" y="270" font-size="12" fill="#000" textLength="77.03" lengthAdjust="spacing" >Position y [V]</text>
<rect x="1037" y="278" width="80" height="50" fill="#000" />
<polygon points="1066.45,293 1074.55,293 1072.55,295 1068.45,295" fill="#00ff00"/>
<polygon points="1066.45,313 1074.55,313 1072.55,311 1068.45,311" fill="#00ff00"/>
<polygon points="1066,293.45 1068,295.45 1068,301.4 1066,302.4" fill="#00ff00"/>
<polygon points="1066,303.6 1068,304.6 1068,310.55 1066,312.55" fill="#00ff00"/>
<polygon points="1075,293.45 1073,295.45 1073,301.4 1075,302.4" fill="#00ff00"/>
<polygon points="1075,303.6 1073,304.6 1073,310.55 1075,312.55" fill="#00ff00"/>
<rect x="1083" y="311" width="2" height="2" fill="#00ff00" />
<polygon points="1090.45,293 1098.55,293 1096.55,295 1092.45,295" fill="#00ff00"/>
<polygon points="1090.45,313 1098.55,313 1096.55,311 1092.45,311" fill="#00ff00"/>
<polygon points="1090,293.45 1092,295.45 1092,301.4 1090,302.4" fill="#00ff00"/>
<polygon points="1090,303.6 1092,304.6 1092,310.55 1090,312.55" fill="#00ff00"/>
<polygon points="1099,293.45 1097,295.45 1097,301.4 1099,302.4" fill="#00ff00"/>
<polygon points="1099,303.6 1097,304.6 1097,310.55 1099,312.55" fill="#00ff00"/>
<polygon points="1102.45,293 1110.55,293 1108.55,295 1104.45,295" fill="#00ff00"/>
<polygon points="1102.45,313 1110.55,313 1108.55,311 1104.45,311" fill="#00ff00"/>
<polygon points="1102,293.45 1104,295.45 1104,301.4 1102,302.4" fill="#00ff00"/>
<polygon points="1102,303.6 1104,304.6 1104,310.55 1102,312.55" fill="#00ff00"/>
<polygon points="1111,293.45 1109,295.45 1109,301.4 1111,302.4" fill="#00ff00"/>
<polygon points="1111,303.6 1109,304.6 1109,310.55 1111,312.55" fill="#00ff00"/>
<text x="1042" y="380" font-size="12" fill="#000" textLength="71.70" lengthAdjust="spacing" >Intensity [V]</text>
<rect x="1037" y="388" width="80" height="50" fill="#000" />
<polygon points="1066.45,403 1074.55,403 1072.55,405 1068.45,405" fill="#00ff00"/>
<polygon points="1066.45,423 1074.55,423 1072.55,421 1068.45,421" fill="#00ff00"/>
<polygon points="1066,403.45 1068,405.45 1068,411.4 1066,412.4" fill="#00ff00"/>
<polygon points="1066,413.6 1068,414.6 1068,420.55 1066,422.55" fill="#00ff00"/>
<polygon points="1075,403.45 1073,405.45 1073,411.4 1075,412.4" fill="#00ff00"/>
<polygon points="1075,413.6 1073,414.6 1073,420.55 1075,422.55" fill="#00ff00"/>
<rect x="1083" y="421" width="2" height="2" fill="#00ff00" />
<polygon points="1090.45,403 1098.55,403 1096.55,405 1092.45,405" fill="#00ff00"/>
<polygon points="1090.45,423 1098.55,423 1096.55,421 1092.45,421" fill="#00ff00"/>
<polygon points="1090,403.45 1092,405.45 1092,411.4 1090,412.4" fill="#00ff00"/>
<polygon points="1090,413.6 1092,414.6 1092,420.55 1090,422.55" fill="#00ff00"/>
<polygon points="1099,403.45 1097,405.45 1097,411.4 1099,412.4" fill="#00ff00"/>
<polygon points="1099,413.6 1097,414.6 1097,420.55 1099,422.55" fill="#00ff00"/>
<polygon points="1102.45,403 1110.55,403 1108.55,405 1104.45,405" fill="#00ff00"/>
<polygon points="1102.45,423 1110.55,423 1108.55,421 1104.45,421" fill="#00ff00"/>
<polygon points="1102,403.45 1104,405.45 1104,411.4 1102,412.4" fill="#00ff00"/>
<polygon points="1102,413.6 1104,414.6 1104,420.55 1102,422.55" fill="#00ff00"/>
<polygon points="1111,403.45 1109,405.45 1109,411.4 1111,412.4" fill="#00ff00"/>
<polygon points="1111,413.6 1109,414.6 1109,420.55 1111,422.55" fill="#00ff00"/>
<rect x="1165" y="427" width="8" height="1" fill="#000" />
<text x="1160" y="432" font-size="11" text-anchor="end" fill="#000" >0</text>
<rect x="1165" y="379" width="8" height="1" fill="#000" />
<text x="1160" y="384" font-size="11" text-anchor="end" fill="#000" >2</text>
<rect x="1165" y="331" width="8" height="1" fill="#000" />
<text x="1160" y="336" font-size="11" text-anchor="end" fill="#000" >4</text>
<rect x="1165" y="282" width="8" height="1" fill="#000" />
<text x="1160" y="287" font-size="11" text-anchor="end" fill="#000" >6</text>
<rect x="1165" y="234" width="8" height="1" fill="#000" />
<text x="1160" y="239" font-size="11" text-anchor="end" fill="#000" >8</text>
<rect x="1165" y="186" width="8" height="1" fill="#000" />
<text x="1160" y="191" font-size="11" text-anchor="end" fill="#000" >10</text>
<rect x="1173" y="184" width="2" height="244" fill="#a0a0a0" />
<rect x="1173" y="184" width="6" height="2" fill="#a0a0a0" />
<rect x="1175" y="186" width="4" height="242" fill="#ffffff" />
<rect x="1179" y="185" width="1" height="244" fill="#e3e3e3" />
<rect x="1175" y="427" width="4" height="1" fill="#008080" />
<rect x="1182" y="182" width="7" height="249" fill="#c8d0d4" />
<rect x="1183" y="183" width="5" height="247" fill="#90ee90" />
<rect x="1183" y="183" width="5" height="29" fill="#ff0000" />
<rect x="1183" y="403" width="5" height="27" fill="#ff0000" />
<rect x="1216" y="427" width="8" height="1" fill="#000" />
<text x="1211" y="432" font-size="11" text-anchor="end" fill="#000" >0</text>
<rect x="1216" y="379" width="8" height="1" fill="#000" />
<text x="1211" y="384" font-size="11" text-anchor="end" fill="#000" >2</text>
<rect x="1216" y="331" width="8" height="1" fill="#000" />
<text x="1211" y="336" font-size="11" text-anchor="end" fill="#000" >4</text>
<rect x="1216" y="282" width="8" height="1" fill="#000" />
<text x="1211" y="287" font-size="11" text-anchor="end" fill="#000" >6</text>
<rect x="1216" y="234" width="8" height="1" fill="#000" />
<text x="1211" y="239" font-size="11" text-anchor="end" fill="#000" >8</text>
<rect x="1216" y="186" width="8" height="1" fill="#000" />
<text x="1211" y="191" font-size="11" text-anchor="end" fill="#000" >10</text>
<rect x="1224" y="184" width="2" height="244" fill="#a0a0a0" />
<rect x="1224" y="184" width="6" height="2" fill="#a0a0a0" />
<rect x="1226" y="186" width="4" height="242" fill="#ffffff" />
<rect x="1230" y="185" width="1" height="244" fill="#e3e3e3" />
<rect x="1226" y="427" width="4" height="1" fill="#008080" />
<rect x="1233" y="182" width="7" height="249" fill="#c8d0d4" />
<rect x="1234" y="183" width="5" height="247" fill="#90ee90" />
<rect x="1234" y="183" width="5" height="29" fill="#ff0000" />
<rect x="1234" y="403" width="5" height="27" fill="#ff0000" />
<text x="1166" y="503" font-size="13" font-weight="bold" fill="#000" textLength="76.97" lengthAdjust="spacing" >Piezo range</text>
<text x="1195" y="519" font-size="13" font-weight="bold" fill="#000" textLength="20.34" lengthAdjust="spacing" >[V]</text>
<text x="1170" y="446" font-size="12" fill="#000" textLength="7.00" lengthAdjust="spacing" >x</text>
<text x="1224" y="446" font-size="12" fill="#000" textLength="7.00" lengthAdjust="spacing" >y</text>
<rect x="63" y="599" width="322" height="321" fill="#ffffff" />
<rect x="63" y="599" width="321" height="2" fill="#a0a0a0" />
<rect x="63" y="599" width="2" height="320" fill="#a0a0a0" />
<rect x="65" y="601" width="318" height="317" fill="#add8e6" />
<line x1="65.5" y1="601" x2="65.5" y2="918" stroke="#8e8989" stroke-width="1" stroke-dasharray="1 2"/>
<line x1="81.5" y1="601" x2="81.5" y2="918" stroke="#8e8989" stroke-width="1" stroke-dasharray="1 2"/>
<line x1="97.5" y1="601" x2="97.5" y2="918" stroke="#8e8989" stroke-width="1" stroke-dasharray="1 2"/>
<line x1="113.5" y1="601" x2="113.5" y2="918" stroke="#8e8989" stroke-width="1" stroke-dasharray="1 2"/>
<line x1="128.5" y1="601" x2="128.5" y2="918" stroke="#8e8989" stroke-width="1" stroke-dasharray="1 2"/>
<line x1="144.5" y1="601" x2="144.5" y2="918" stroke="#8e8989" stroke-width="1" stroke-dasharray="1 2"/>
<line x1="160.5" y1="601" x2="160.5" y2="918" stroke="#8e8989" stroke-width="1" stroke-dasharray="1 2"/>
<line x1="176.5" y1="601" x2="176.5" y2="918" stroke="#8e8989" stroke-width="1" stroke-dasharray="1 2"/>
<line x1="192.5" y1="601" x2="192.5" y2="918" stroke="#8e8989" stroke-width="1" stroke-dasharray="1 2"/>
<line x1="208.5" y1="601" x2="208.5" y2="918" stroke="#8e8989" stroke-width="1" stroke-dasharray="1 2"/>
<line x1="224.5" y1="601" x2="224.5" y2="918" stroke="#8e8989" stroke-width="1" stroke-dasharray="1 2"/>
<line x1="239.5" y1="601" x2="239.5" y2="918" stroke="#8e8989" stroke-width="1" stroke-dasharray="1 2"/>
<line x1="255.5" y1="601" x2="255.5" y2="918" stroke="#8e8989" stroke-width="1" stroke-dasharray="1 2"/>
<line x1="271.5" y1="601" x2="271.5" y2="918" stroke="#8e8989" stroke-width="1" stroke-dasharray="1 2"/>
<line x1="287.5" y1="601" x2="287.5" y2="918" stroke="#8e8989" stroke-width="1" stroke-dasharray="1 2"/>
<line x1="303.5" y1="601" x2="303.5" y2="918" stroke="#8e8989" stroke-width="1" stroke-dasharray="1 2"/>
<line x1="319.5" y1="601" x2="319.5" y2="918" stroke="#8e8989" stroke-width="1" stroke-dasharray="1 2"/>
<line x1="334.5" y1="601" x2="334.5" y2="918" stroke="#8e8989" stroke-width="1" stroke-dasharray="1 2"/>
<line x1="350.5" y1="601" x2="350.5" y2="918" stroke="#8e8989" stroke-width="1" stroke-dasharray="1 2"/>
<line x1="366.5" y1="601" x2="366.5" y2="918" stroke="#8e8989" stroke-width="1" stroke-dasharray="1 2"/>
<line x1="382.5" y1="601" x2="382.5" y2="918" stroke="#8e8989" stroke-width="1" stroke-dasharray="1 2"/>
<line x1="65" y1="917.5" x2="383" y2="917.5" stroke="#8e8989" stroke-width="1" stroke-dasharray="1 2"/>
<line x1="65" y1="901.5" x2="383" y2="901.5" stroke="#8e8989" stroke-width="1" stroke-dasharray="1 2"/>
<line x1="65" y1="885.5" x2="383" y2="885.5" stroke="#8e8989" stroke-width="1" stroke-dasharray="1 2"/>
<line x1="65" y1="870.5" x2="383" y2="870.5" stroke="#8e8989" stroke-width="1" stroke-dasharray="1 2"/>
<line x1="65" y1="854.5" x2="383" y2="854.5" stroke="#8e8989" stroke-width="1" stroke-dasharray="1 2"/>
<line x1="65" y1="838.5" x2="383" y2="838.5" stroke="#8e8989" stroke-width="1" stroke-dasharray="1 2"/>
<line x1="65" y1="822.5" x2="383" y2="822.5" stroke="#8e8989" stroke-width="1" stroke-dasharray="1 2"/>
<line x1="65" y1="806.5" x2="383" y2="806.5" stroke="#8e8989" stroke-width="1" stroke-dasharray="1 2"/>
<line x1="65" y1="791.5" x2="383" y2="791.5" stroke="#8e8989" stroke-width="1" stroke-dasharray="1 2"/>
<line x1="65" y1="775.5" x2="383" y2="775.5" stroke="#8e8989" stroke-width="1" stroke-dasharray="1 2"/>
<line x1="65" y1="759.5" x2="383" y2="759.5" stroke="#8e8989" stroke-width="1" stroke-dasharray="1 2"/>
<line x1="65" y1="743.5" x2="383" y2="743.5" stroke="#8e8989" stroke-width="1" stroke-dasharray="1 2"/>
<line x1="65" y1="727.5" x2="383" y2="727.5" stroke="#8e8989" stroke-width="1" stroke-dasharray="1 2"/>
<line x1="65" y1="712.5" x2="383" y2="712.5" stroke="#8e8989" stroke-width="1" stroke-dasharray="1 2"/>
<line x1="65" y1="696.5" x2="383" y2="696.5" stroke="#8e8989" stroke-width="1" stroke-dasharray="1 2"/>
<line x1="65" y1="680.5" x2="383" y2="680.5" stroke="#8e8989" stroke-width="1" stroke-dasharray="1 2"/>
<line x1="65" y1="664.5" x2="383" y2="664.5" stroke="#8e8989" stroke-width="1" stroke-dasharray="1 2"/>
<line x1="65" y1="648.5" x2="383" y2="648.5" stroke="#8e8989" stroke-width="1" stroke-dasharray="1 2"/>
<line x1="65" y1="633.5" x2="383" y2="633.5" stroke="#8e8989" stroke-width="1" stroke-dasharray="1 2"/>
<line x1="65" y1="617.5" x2="383" y2="617.5" stroke="#8e8989" stroke-width="1" stroke-dasharray="1 2"/>
<line x1="65" y1="601.5" x2="383" y2="601.5" stroke="#8e8989" stroke-width="1" stroke-dasharray="1 2"/>
<rect x="224" y="601" width="1" height="317" fill="#808080" />
<rect x="65" y="759" width="318" height="1" fill="#808080" />
<rect x="65" y="596" width="317" height="1" fill="#000" />
<rect x="65" y="590" width="1" height="6" fill="#000" />
<rect x="81" y="592" width="1" height="4" fill="#000" />
<rect x="97" y="588" width="1" height="8" fill="#000" />
<rect x="113" y="592" width="1" height="4" fill="#000" />
<rect x="128" y="590" width="1" height="6" fill="#000" />
<rect x="144" y="592" width="1" height="4" fill="#000" />
<rect x="160" y="588" width="1" height="8" fill="#000" />
<rect x="176" y="592" width="1" height="4" fill="#000" />
<rect x="192" y="590" width="1" height="6" fill="#000" />
<rect x="208" y="592" width="1" height="4" fill="#000" />
<rect x="224" y="588" width="1" height="8" fill="#000" />
<rect x="239" y="592" width="1" height="4" fill="#000" />
<rect x="255" y="590" width="1" height="6" fill="#000" />
<rect x="271" y="592" width="1" height="4" fill="#000" />
<rect x="287" y="588" width="1" height="8" fill="#000" />
<rect x="303" y="592" width="1" height="4" fill="#000" />
<rect x="319" y="590" width="1" height="6" fill="#000" />
<rect x="334" y="592" width="1" height="4" fill="#000" />
<rect x="350" y="588" width="1" height="8" fill="#000" />
<rect x="366" y="592" width="1" height="4" fill="#000" />
<text x="95.5" y="583" font-size="11" text-anchor="middle" fill="#000" >-4</text>
<text x="158.5" y="583" font-size="11" text-anchor="middle" fill="#000" >-2</text>
<text x="223.5" y="583" font-size="11" text-anchor="middle" fill="#000" >0</text>
<text x="286.5" y="583" font-size="11" text-anchor="middle" fill="#000" >2</text>
<text x="349.5" y="583" font-size="11" text-anchor="middle" fill="#000" >4</text>
<rect x="60" y="601" width="1" height="316" fill="#000" />
<rect x="56" y="901" width="4" height="1" fill="#000" />
<rect x="52" y="885" width="8" height="1" fill="#000" />
<rect x="56" y="870" width="4" height="1" fill="#000" />
<rect x="54" y="854" width="6" height="1" fill="#000" />
<rect x="56" y="838" width="4" height="1" fill="#000" />
<rect x="52" y="822" width="8" height="1" fill="#000" />
<rect x="56" y="806" width="4" height="1" fill="#000" />
<rect x="54" y="791" width="6" height="1" fill="#000" />
<rect x="56" y="775" width="4" height="1" fill="#000" />
<rect x="52" y="759" width="8" height="1" fill="#000" />
<rect x="56" y="743" width="4" height="1" fill="#000" />
<rect x="54" y="727" width="6" height="1" fill="#000" />
<rect x="56" y="712" width="4" height="1" fill="#000" />
<rect x="52" y="696" width="8" height="1" fill="#000" />
<rect x="56" y="680" width="4" height="1" fill="#000" />
<rect x="54" y="664" width="6" height="1" fill="#000" />
<rect x="56" y="648" width="4" height="1" fill="#000" />
<rect x="52" y="633" width="8" height="1" fill="#000" />
<rect x="56" y="617" width="4" height="1" fill="#000" />
<rect x="54" y="601" width="6" height="1" fill="#000" />
<text x="47" y="890" font-size="11" text-anchor="end" fill="#000" >-4</text>
<text x="47" y="827" font-size="11" text-anchor="end" fill="#000" >-2</text>
<text x="47" y="764" font-size="11" text-anchor="end" fill="#000" >0</text>
<text x="47" y="700" font-size="11" text-anchor="end" fill="#000" >2</text>
<text x="47" y="637" font-size="11" text-anchor="end" fill="#000" >4</text>
<rect x="65" y="922" width="317" height="1" fill="#000" />
<rect x="65" y="923" width="1" height="6" fill="#000" />
<rect x="81" y="923" width="1" height="4" fill="#000" />
<rect x="97" y="923" width="1" height="8" fill="#000" />
<rect x="113" y="923" width="1" height="4" fill="#000" />
<rect x="128" y="923" width="1" height="6" fill="#000" />
<rect x="144" y="923" width="1" height="4" fill="#000" />
<rect x="160" y="923" width="1" height="8" fill="#000" />
<rect x="176" y="923" width="1" height="4" fill="#000" />
<rect x="192" y="923" width="1" height="6" fill="#000" />
<rect x="208" y="923" width="1" height="4" fill="#000" />
<rect x="224" y="923" width="1" height="8" fill="#000" />
<rect x="239" y="923" width="1" height="4" fill="#000" />
<rect x="255" y="923" width="1" height="6" fill="#000" />
<rect x="271" y="923" width="1" height="4" fill="#000" />
<rect x="287" y="923" width="1" height="8" fill="#000" />
<rect x="303" y="923" width="1" height="4" fill="#000" />
<rect x="319" y="923" width="1" height="6" fill="#000" />
<rect x="334" y="923" width="1" height="4" fill="#000" />
<rect x="350" y="923" width="1" height="8" fill="#000" />
<rect x="366" y="923" width="1" height="4" fill="#000" />
<text x="95.5" y="944" font-size="11" text-anchor="middle" fill="#000" >-4</text>
<text x="158.5" y="944" font-size="11" text-anchor="middle" fill="#000" >-2</text>
<text x="223.5" y="944" font-size="11" text-anchor="middle" fill="#000" >0</text>
<text x="286.5" y="944" font-size="11" text-anchor="middle" fill="#000" >2</text>
<text x="349.5" y="944" font-size="11" text-anchor="middle" fill="#000" >4</text>
<rect x="387" y="601" width="1" height="316" fill="#000" />
<rect x="388" y="901" width="4" height="1" fill="#000" />
<rect x="388" y="885" width="8" height="1" fill="#000" />
<rect x="388" y="870" width="4" height="1" fill="#000" />
<rect x="388" y="854" width="6" height="1" fill="#000" />
<rect x="388" y="838" width="4" height="1" fill="#000" />
<rect x="388" y="822" width="8" height="1" fill="#000" />
<rect x="388" y="806" width="4" height="1" fill="#000" />
<rect x="388" y="791" width="6" height="1" fill="#000" />
<rect x="388" y="775" width="4" height="1" fill="#000" />
<rect x="388" y="759" width="8" height="1" fill="#000" />
<rect x="388" y="743" width="4" height="1" fill="#000" />
<rect x="388" y="727" width="6" height="1" fill="#000" />
<rect x="388" y="712" width="4" height="1" fill="#000" />
<rect x="388" y="696" width="8" height="1" fill="#000" />
<rect x="388" y="680" width="4" height="1" fill="#000" />
<rect x="388" y="664" width="6" height="1" fill="#000" />
<rect x="388" y="648" width="4" height="1" fill="#000" />
<rect x="388" y="633" width="8" height="1" fill="#000" />
<rect x="388" y="617" width="4" height="1" fill="#000" />
<rect x="388" y="601" width="6" height="1" fill="#000" />
<text x="400" y="890" font-size="11" fill="#000" >-4</text>
<text x="400" y="827" font-size="11" fill="#000" >-2</text>
<text x="400" y="764" font-size="11" fill="#000" >0</text>
<text x="400" y="700" font-size="11" fill="#000" >2</text>
<text x="400" y="637" font-size="11" fill="#000" >4</text>
<text x="207" y="959" font-size="13" font-weight="bold" fill="#000" textLength="31.17" lengthAdjust="spacing" >x [V]</text>
<rect x="303" y="954" width="80" height="20" fill="#adadad" />
<rect x="304" y="955" width="78" height="18" fill="#e1e1e1" />
<text x="317" y="969" font-size="12" fill="#000" textLength="51.14" lengthAdjust="spacing" >Zoom off</text>
<rect x="921" y="954" width="80" height="20" fill="#adadad" />
<rect x="922" y="955" width="78" height="18" fill="#e1e1e1" />
<text x="935" y="969" font-size="12" fill="#000" textLength="50.14" lengthAdjust="spacing" >Zoom off</text>
<rect x="595" y="599" width="404" height="196" fill="#ffffff" />
<rect x="595" y="599" width="403" height="2" fill="#a0a0a0" />
<rect x="595" y="599" width="2" height="195" fill="#a0a0a0" />
<rect x="597" y="601" width="400" height="192" fill="#add8e6" />
<line x1="597.5" y1="601" x2="597.5" y2="793" stroke="#8e8989" stroke-width="1" stroke-dasharray="1 2"/>
<line x1="617.5" y1="601" x2="617.5" y2="793" stroke="#8e8989" stroke-width="1" stroke-dasharray="1 2"/>
<line x1="637.5" y1="601" x2="637.5" y2="793" stroke="#8e8989" stroke-width="1" stroke-dasharray="1 2"/>
<line x1="657.5" y1="601" x2="657.5" y2="793" stroke="#8e8989" stroke-width="1" stroke-dasharray="1 2"/>
<line x1="677.5" y1="601" x2="677.5" y2="793" stroke="#8e8989" stroke-width="1" stroke-dasharray="1 2"/>
<line x1="697.5" y1="601" x2="697.5" y2="793" stroke="#8e8989" stroke-width="1" stroke-dasharray="1 2"/>
<line x1="717.5" y1="601" x2="717.5" y2="793" stroke="#8e8989" stroke-width="1" stroke-dasharray="1 2"/>
<line x1="737.5" y1="601" x2="737.5" y2="793" stroke="#8e8989" stroke-width="1" stroke-dasharray="1 2"/>
<line x1="757.5" y1="601" x2="757.5" y2="793" stroke="#8e8989" stroke-width="1" stroke-dasharray="1 2"/>
<line x1="777.5" y1="601" x2="777.5" y2="793" stroke="#8e8989" stroke-width="1" stroke-dasharray="1 2"/>
<line x1="797.5" y1="601" x2="797.5" y2="793" stroke="#8e8989" stroke-width="1" stroke-dasharray="1 2"/>
<line x1="816.5" y1="601" x2="816.5" y2="793" stroke="#8e8989" stroke-width="1" stroke-dasharray="1 2"/>
<line x1="836.5" y1="601" x2="836.5" y2="793" stroke="#8e8989" stroke-width="1" stroke-dasharray="1 2"/>
<line x1="856.5" y1="601" x2="856.5" y2="793" stroke="#8e8989" stroke-width="1" stroke-dasharray="1 2"/>
<line x1="876.5" y1="601" x2="876.5" y2="793" stroke="#8e8989" stroke-width="1" stroke-dasharray="1 2"/>
<line x1="896.5" y1="601" x2="896.5" y2="793" stroke="#8e8989" stroke-width="1" stroke-dasharray="1 2"/>
<line x1="916.5" y1="601" x2="916.5" y2="793" stroke="#8e8989" stroke-width="1" stroke-dasharray="1 2"/>
<line x1="936.5" y1="601" x2="936.5" y2="793" stroke="#8e8989" stroke-width="1" stroke-dasharray="1 2"/>
<line x1="956.5" y1="601" x2="956.5" y2="793" stroke="#8e8989" stroke-width="1" stroke-dasharray="1 2"/>
<line x1="976.5" y1="601" x2="976.5" y2="793" stroke="#8e8989" stroke-width="1" stroke-dasharray="1 2"/>
<line x1="996.5" y1="601" x2="996.5" y2="793" stroke="#8e8989" stroke-width="1" stroke-dasharray="1 2"/>
<line x1="597" y1="792.5" x2="997" y2="792.5" stroke="#8e8989" stroke-width="1" stroke-dasharray="1 2"/>
<line x1="597" y1="782.5" x2="997" y2="782.5" stroke="#8e8989" stroke-width="1" stroke-dasharray="1 2"/>
<line x1="597" y1="773.5" x2="997" y2="773.5" stroke="#8e8989" stroke-width="1" stroke-dasharray="1 2"/>
<line x1="597" y1="763.5" x2="997" y2="763.5" stroke="#8e8989" stroke-width="1" stroke-dasharray="1 2"/>
<line x1="597" y1="754.5" x2="997" y2="754.5" stroke="#8e8989" stroke-width="1" stroke-dasharray="1 2"/>
<line x1="597" y1="744.5" x2="997" y2="744.5" stroke="#8e8989" stroke-width="1" stroke-dasharray="1 2"/>
<line x1="597" y1="735.5" x2="997" y2="735.5" stroke="#8e8989" stroke-width="1" stroke-dasharray="1 2"/>
<line x1="597" y1="725.5" x2="997" y2="725.5" stroke="#8e8989" stroke-width="1" stroke-dasharray="1 2"/>
<line x1="597" y1="716.5" x2="997" y2="716.5" stroke="#8e8989" stroke-width="1" stroke-dasharray="1 2"/>
<line x1="597" y1="706.5" x2="997" y2="706.5" stroke="#8e8989" stroke-width="1" stroke-dasharray="1 2"/>
<line x1="597" y1="697.5" x2="997" y2="697.5" stroke="#8e8989" stroke-width="1" stroke-dasharray="1 2"/>
<line x1="597" y1="687.5" x2="997" y2="687.5" stroke="#8e8989" stroke-width="1" stroke-dasharray="1 2"/>
<line x1="597" y1="677.5" x2="997" y2="677.5" stroke="#8e8989" stroke-width="1" stroke-dasharray="1 2"/>
<line x1="597" y1="668.5" x2="997" y2="668.5" stroke="#8e8989" stroke-width="1" stroke-dasharray="1 2"/>
<line x1="597" y1="658.5" x2="997" y2="658.5" stroke="#8e8989" stroke-width="1" stroke-dasharray="1 2"/>
<line x1="597" y1="649.5" x2="997" y2="649.5" stroke="#8e8989" stroke-width="1" stroke-dasharray="1 2"/>
<line x1="597" y1="639.5" x2="997" y2="639.5" stroke="#8e8989" stroke-width="1" stroke-dasharray="1 2"/>
<line x1="597" y1="630.5" x2="997" y2="630.5" stroke="#8e8989" stroke-width="1" stroke-dasharray="1 2"/>
<line x1="597" y1="620.5" x2="997" y2="620.5" stroke="#8e8989" stroke-width="1" stroke-dasharray="1 2"/>
<line x1="597" y1="611.5" x2="997" y2="611.5" stroke="#8e8989" stroke-width="1" stroke-dasharray="1 2"/>
<line x1="597" y1="601.5" x2="997" y2="601.5" stroke="#8e8989" stroke-width="1" stroke-dasharray="1 2"/>
<rect x="597" y="697" width="400" height="1" fill="#808080" />
<rect x="597" y="596" width="400" height="1" fill="#000" />
<rect x="597" y="588" width="1" height="8" fill="#000" />
<rect x="617" y="592" width="1" height="4" fill="#000" />
<rect x="637" y="590" width="1" height="6" fill="#000" />
<rect x="657" y="592" width="1" height="4" fill="#000" />
<rect x="677" y="588" width="1" height="8" fill="#000" />
<rect x="697" y="592" width="1" height="4" fill="#000" />
<rect x="717" y="590" width="1" height="6" fill="#000" />
<rect x="737" y="592" width="1" height="4" fill="#000" />
<rect x="757" y="588" width="1" height="8" fill="#000" />
<rect x="777" y="592" width="1" height="4" fill="#000" />
<rect x="797" y="590" width="1" height="6" fill="#000" />
<rect x="816" y="592" width="1" height="4" fill="#000" />
<rect x="836" y="588" width="1" height="8" fill="#000" />
<rect x="856" y="592" width="1" height="4" fill="#000" />
<rect x="876" y="590" width="1" height="6" fill="#000" />
<rect x="896" y="592" width="1" height="4" fill="#000" />
<rect x="916" y="588" width="1" height="8" fill="#000" />
<rect x="936" y="592" width="1" height="4" fill="#000" />
<rect x="956" y="590" width="1" height="6" fill="#000" />
<rect x="976" y="592" width="1" height="4" fill="#000" />
<rect x="996" y="588" width="1" height="8" fill="#000" />
<text x="596.5" y="583" font-size="11" text-anchor="middle" fill="#000" >0</text>
<text x="676.5" y="583" font-size="11" text-anchor="middle" fill="#000" >2</text>
<text x="756.5" y="583" font-size="11" text-anchor="middle" fill="#000" >4</text>
<text x="835.5" y="583" font-size="11" text-anchor="middle" fill="#000" >6</text>
<text x="915.5" y="583" font-size="11" text-anchor="middle" fill="#000" >8</text>
<text x="995.5" y="583" font-size="11" text-anchor="middle" fill="#000" >10</text>
<rect x="592" y="601" width="1" height="191" fill="#000" />
<rect x="588" y="782" width="4" height="1" fill="#000" />
<rect x="584" y="773" width="8" height="1" fill="#000" />
<rect x="588" y="763" width="4" height="1" fill="#000" />
<rect x="586" y="754" width="6" height="1" fill="#000" />
<rect x="588" y="744" width="4" height="1" fill="#000" />
<rect x="584" y="735" width="8" height="1" fill="#000" />
<rect x="588" y="725" width="4" height="1" fill="#000" />
<rect x="586" y="716" width="6" height="1" fill="#000" />
<rect x="588" y="706" width="4" height="1" fill="#000" />
<rect x="584" y="697" width="8" height="1" fill="#000" />
<rect x="588" y="687" width="4" height="1" fill="#000" />
<rect x="586" y="677" width="6" height="1" fill="#000" />
<rect x="588" y="668" width="4" height="1" fill="#000" />
<rect x="584" y="658" width="8" height="1" fill="#000" />
<rect x="588" y="649" width="4" height="1" fill="#000" />
<rect x="586" y="639" width="6" height="1" fill="#000" />
<rect x="588" y="630" width="4" height="1" fill="#000" />
<rect x="584" y="620" width="8" height="1" fill="#000" />
<rect x="588" y="611" width="4" height="1" fill="#000" />
<rect x="586" y="601" width="6" height="1" fill="#000" />
<text x="579" y="777" font-size="11" text-anchor="end" fill="#000" >-4</text>
<text x="579" y="739" font-size="11" text-anchor="end" fill="#000" >-2</text>
<text x="579" y="701" font-size="11" text-anchor="end" fill="#000" >0</text>
<text x="579" y="663" font-size="11" text-anchor="end" fill="#000" >2</text>
<text x="579" y="625" font-size="11" text-anchor="end" fill="#000" >4</text>
<rect x="595" y="797" width="403" height="121" fill="#ffffff" />
<rect x="595" y="797" width="402" height="2" fill="#a0a0a0" />
<rect x="595" y="797" width="2" height="120" fill="#a0a0a0" />
<rect x="597" y="799" width="399" height="117" fill="#f0ffff" />
<line x1="597.5" y1="799" x2="597.5" y2="916" stroke="#8e8989" stroke-width="1" stroke-dasharray="1 2"/>
<line x1="617.5" y1="799" x2="617.5" y2="916" stroke="#8e8989" stroke-width="1" stroke-dasharray="1 2"/>
<line x1="637.5" y1="799" x2="637.5" y2="916" stroke="#8e8989" stroke-width="1" stroke-dasharray="1 2"/>
<line x1="657.5" y1="799" x2="657.5" y2="916" stroke="#8e8989" stroke-width="1" stroke-dasharray="1 2"/>
<line x1="676.5" y1="799" x2="676.5" y2="916" stroke="#8e8989" stroke-width="1" stroke-dasharray="1 2"/>
<line x1="696.5" y1="799" x2="696.5" y2="916" stroke="#8e8989" stroke-width="1" stroke-dasharray="1 2"/>
<line x1="716.5" y1="799" x2="716.5" y2="916" stroke="#8e8989" stroke-width="1" stroke-dasharray="1 2"/>
<line x1="736.5" y1="799" x2="736.5" y2="916" stroke="#8e8989" stroke-width="1" stroke-dasharray="1 2"/>
<line x1="756.5" y1="799" x2="756.5" y2="916" stroke="#8e8989" stroke-width="1" stroke-dasharray="1 2"/>
<line x1="776.5" y1="799" x2="776.5" y2="916" stroke="#8e8989" stroke-width="1" stroke-dasharray="1 2"/>
<line x1="796.5" y1="799" x2="796.5" y2="916" stroke="#8e8989" stroke-width="1" stroke-dasharray="1 2"/>
<line x1="815.5" y1="799" x2="815.5" y2="916" stroke="#8e8989" stroke-width="1" stroke-dasharray="1 2"/>
<line x1="835.5" y1="799" x2="835.5" y2="916" stroke="#8e8989" stroke-width="1" stroke-dasharray="1 2"/>
<line x1="855.5" y1="799" x2="855.5" y2="916" stroke="#8e8989" stroke-width="1" stroke-dasharray="1 2"/>
<line x1="875.5" y1="799" x2="875.5" y2="916" stroke="#8e8989" stroke-width="1" stroke-dasharray="1 2"/>
<line x1="895.5" y1="799" x2="895.5" y2="916" stroke="#8e8989" stroke-width="1" stroke-dasharray="1 2"/>
<line x1="915.5" y1="799" x2="915.5" y2="916" stroke="#8e8989" stroke-width="1" stroke-dasharray="1 2"/>
<line x1="934.5" y1="799" x2="934.5" y2="916" stroke="#8e8989" stroke-width="1" stroke-dasharray="1 2"/>
<line x1="954.5" y1="799" x2="954.5" y2="916" stroke="#8e8989" stroke-width="1" stroke-dasharray="1 2"/>
<line x1="974.5" y1="799" x2="974.5" y2="916" stroke="#8e8989" stroke-width="1" stroke-dasharray="1 2"/>
<line x1="994.5" y1="799" x2="994.5" y2="916" stroke="#8e8989" stroke-width="1" stroke-dasharray="1 2"/>
<line x1="597" y1="915.5" x2="996" y2="915.5" stroke="#8e8989" stroke-width="1" stroke-dasharray="1 2"/>
<line x1="597" y1="901.5" x2="996" y2="901.5" stroke="#8e8989" stroke-width="1" stroke-dasharray="1 2"/>
<line x1="597" y1="886.5" x2="996" y2="886.5" stroke="#8e8989" stroke-width="1" stroke-dasharray="1 2"/>
<line x1="597" y1="872.5" x2="996" y2="872.5" stroke="#8e8989" stroke-width="1" stroke-dasharray="1 2"/>
<line x1="597" y1="857.5" x2="996" y2="857.5" stroke="#8e8989" stroke-width="1" stroke-dasharray="1 2"/>
<line x1="597" y1="843.5" x2="996" y2="843.5" stroke="#8e8989" stroke-width="1" stroke-dasharray="1 2"/>
<line x1="597" y1="828.5" x2="996" y2="828.5" stroke="#8e8989" stroke-width="1" stroke-dasharray="1 2"/>
<line x1="597" y1="814.5" x2="996" y2="814.5" stroke="#8e8989" stroke-width="1" stroke-dasharray="1 2"/>
<line x1="597" y1="799.5" x2="996" y2="799.5" stroke="#8e8989" stroke-width="1" stroke-dasharray="1 2"/>
<rect x="592" y="799" width="1" height="117" fill="#000" />
<rect x="584" y="915" width="8" height="1" fill="#000" />
<rect x="586" y="901" width="6" height="1" fill="#000" />
<rect x="584" y="886" width="8" height="1" fill="#000" />
<rect x="586" y="872" width="6" height="1" fill="#000" />
<rect x="584" y="857" width="8" height="1" fill="#000" />
<rect x="586" y="843" width="6" height="1" fill="#000" />
<rect x="584" y="828" width="8" height="1" fill="#000" />
<rect x="586" y="814" width="6" height="1" fill="#000" />
<rect x="584" y="799" width="8" height="1" fill="#000" />
<text x="579" y="920" font-size="11" text-anchor="end" fill="#000" >0</text>
<text x="579" y="891" font-size="11" text-anchor="end" fill="#000" >2</text>
<text x="579" y="862" font-size="11" text-anchor="end" fill="#000" >4</text>
<text x="579" y="833" font-size="11" text-anchor="end" fill="#000" >6</text>
<text x="579" y="804" font-size="11" text-anchor="end" fill="#000" >8</text>
<rect x="597" y="920" width="398" height="1" fill="#000" />
<rect x="597" y="921" width="1" height="8" fill="#000" />
<rect x="617" y="921" width="1" height="4" fill="#000" />
<rect x="637" y="921" width="1" height="6" fill="#000" />
<rect x="657" y="921" width="1" height="4" fill="#000" />
<rect x="676" y="921" width="1" height="8" fill="#000" />
<rect x="696" y="921" width="1" height="4" fill="#000" />
<rect x="716" y="921" width="1" height="6" fill="#000" />
<rect x="736" y="921" width="1" height="4" fill="#000" />
<rect x="756" y="921" width="1" height="8" fill="#000" />
<rect x="776" y="921" width="1" height="4" fill="#000" />
<rect x="796" y="921" width="1" height="6" fill="#000" />
<rect x="815" y="921" width="1" height="4" fill="#000" />
<rect x="835" y="921" width="1" height="8" fill="#000" />
<rect x="855" y="921" width="1" height="4" fill="#000" />
<rect x="875" y="921" width="1" height="6" fill="#000" />
<rect x="895" y="921" width="1" height="4" fill="#000" />
<rect x="915" y="921" width="1" height="8" fill="#000" />
<rect x="934" y="921" width="1" height="4" fill="#000" />
<rect x="954" y="921" width="1" height="6" fill="#000" />
<rect x="974" y="921" width="1" height="4" fill="#000" />
<rect x="994" y="921" width="1" height="8" fill="#000" />
<text x="596.5" y="942" font-size="11" text-anchor="middle" fill="#000" >0</text>
<text x="675.5" y="942" font-size="11" text-anchor="middle" fill="#000" >2</text>
<text x="755.5" y="942" font-size="11" text-anchor="middle" fill="#000" >4</text>
<text x="834.5" y="942" font-size="11" text-anchor="middle" fill="#000" >6</text>
<text x="914.5" y="942" font-size="11" text-anchor="middle" fill="#000" >8</text>
<text x="993.5" y="942" font-size="11" text-anchor="middle" fill="#000" >10</text>
<text x="769" y="957" font-size="13" font-weight="bold" fill="#000" textLength="51.61" lengthAdjust="spacing" >Time [s]</text>
<text x="556" y="683" font-size="13" font-weight="bold" fill="#ff0000" textLength="7.23" lengthAdjust="spacing" >x</text>
<text x="555" y="699" font-size="13" font-weight="bold" fill="#1f4848" textLength="8.23" lengthAdjust="spacing" >y</text>
<text x="545" y="718" font-size="13" font-weight="bold" fill="#000" textLength="19.34" lengthAdjust="spacing" >[V]</text>
<path d="M558.2,848 H563.8 V849.1 Q562.4,849.2 562.3,850 V855 Q562.4,855.8 563.8,855.9 V857 H558.2 V855.9 Q559.6,855.8 559.7,855 V850 Q559.6,849.2 558.2,849.1 Z" fill="#0000ff"/>
<text x="546" y="874" font-size="13" font-weight="bold" fill="#000" textLength="19.34" lengthAdjust="spacing" >[V]</text>
<text x="451" y="614" font-size="13" font-weight="bold" fill="#000" textLength="48.25" lengthAdjust="spacing" >Stage 2</text>
<text x="439" y="647" font-size="12" fill="#000" textLength="70.72" lengthAdjust="spacing" >Stabilization</text>
<rect x="436" y="657" width="78" height="22" fill="#005499" />
<rect x="437" y="658" width="76" height="20" fill="#cce4f7" />
<text x="466" y="673" font-size="12" font-weight="bold" fill="#000" textLength="17.00" lengthAdjust="spacing" >ON</text>
<circle cx="444.5" cy="695.3" r="6.4" fill="url(#gbez2)"/>
<circle cx="444.5" cy="695.3" r="5.1" fill="#4a9a36"/>
<circle cx="444.5" cy="695.3" r="4.4" fill="url(#gled)"/>
<ellipse cx="444.5" cy="692.6999999999999" rx="3" ry="1.7" fill="url(#ghi)"/>
<ellipse cx="444.5" cy="698.6999999999999" rx="2" ry="0.9" fill="#e8ffe0" opacity="0.8"/>
<text x="457" y="701" font-size="12" fill="#000" textLength="33.69" lengthAdjust="spacing" >Active</text>
<rect x="435" y="725" width="13" height="13" fill="#bcbcbc" />
<rect x="436" y="726" width="11" height="11" fill="#ffffff" />
<text x="452" y="737" font-size="12" fill="#6d6d6d" textLength="33.03" lengthAdjust="spacing" >Show</text>
<text x="451" y="755" font-size="12" fill="#6d6d6d" textLength="50.02" lengthAdjust="spacing" >statistics</text>
<text x="1039" y="610" font-size="12" fill="#000" textLength="77.03" lengthAdjust="spacing" >Position x [V]</text>
<rect x="1037" y="618" width="80" height="50" fill="#000" />
<polygon points="1066.45,633 1074.55,633 1072.55,635 1068.45,635" fill="#00ff00"/>
<polygon points="1066.45,653 1074.55,653 1072.55,651 1068.45,651" fill="#00ff00"/>
<polygon points="1066,633.45 1068,635.45 1068,641.4 1066,642.4" fill="#00ff00"/>
<polygon points="1066,643.6 1068,644.6 1068,650.55 1066,652.55" fill="#00ff00"/>
<polygon points="1075,633.45 1073,635.45 1073,641.4 1075,642.4" fill="#00ff00"/>
<polygon points="1075,643.6 1073,644.6 1073,650.55 1075,652.55" fill="#00ff00"/>
<rect x="1083" y="651" width="2" height="2" fill="#00ff00" />
<polygon points="1090.45,633 1098.55,633 1096.55,635 1092.45,635" fill="#00ff00"/>
<polygon points="1090.45,653 1098.55,653 1096.55,651 1092.45,651" fill="#00ff00"/>
<polygon points="1090,633.45 1092,635.45 1092,641.4 1090,642.4" fill="#00ff00"/>
<polygon points="1090,643.6 1092,644.6 1092,650.55 1090,652.55" fill="#00ff00"/>
<polygon points="1099,633.45 1097,635.45 1097,641.4 1099,642.4" fill="#00ff00"/>
<polygon points="1099,643.6 1097,644.6 1097,650.55 1099,652.55" fill="#00ff00"/>
<polygon points="1102.45,633 1110.55,633 1108.55,635 1104.45,635" fill="#00ff00"/>
<polygon points="1102.45,653 1110.55,653 1108.55,651 1104.45,651" fill="#00ff00"/>
<polygon points="1102,633.45 1104,635.45 1104,641.4 1102,642.4" fill="#00ff00"/>
<polygon points="1102,643.6 1104,644.6 1104,650.55 1102,652.55" fill="#00ff00"/>
<polygon points="1111,633.45 1109,635.45 1109,641.4 1111,642.4" fill="#00ff00"/>
<polygon points="1111,643.6 1109,644.6 1109,650.55 1111,652.55" fill="#00ff00"/>
<text x="1039" y="710" font-size="12" fill="#000" textLength="77.03" lengthAdjust="spacing" >Position y [V]</text>
<rect x="1037" y="718" width="80" height="50" fill="#000" />
<polygon points="1066.45,733 1074.55,733 1072.55,735 1068.45,735" fill="#00ff00"/>
<polygon points="1066.45,753 1074.55,753 1072.55,751 1068.45,751" fill="#00ff00"/>
<polygon points="1066,733.45 1068,735.45 1068,741.4 1066,742.4" fill="#00ff00"/>
<polygon points="1066,743.6 1068,744.6 1068,750.55 1066,752.55" fill="#00ff00"/>
<polygon points="1075,733.45 1073,735.45 1073,741.4 1075,742.4" fill="#00ff00"/>
<polygon points="1075,743.6 1073,744.6 1073,750.55 1075,752.55" fill="#00ff00"/>
<rect x="1083" y="751" width="2" height="2" fill="#00ff00" />
<polygon points="1090.45,733 1098.55,733 1096.55,735 1092.45,735" fill="#00ff00"/>
<polygon points="1090.45,753 1098.55,753 1096.55,751 1092.45,751" fill="#00ff00"/>
<polygon points="1090,733.45 1092,735.45 1092,741.4 1090,742.4" fill="#00ff00"/>
<polygon points="1090,743.6 1092,744.6 1092,750.55 1090,752.55" fill="#00ff00"/>
<polygon points="1099,733.45 1097,735.45 1097,741.4 1099,742.4" fill="#00ff00"/>
<polygon points="1099,743.6 1097,744.6 1097,750.55 1099,752.55" fill="#00ff00"/>
<polygon points="1102.45,733 1110.55,733 1108.55,735 1104.45,735" fill="#00ff00"/>
<polygon points="1102.45,753 1110.55,753 1108.55,751 1104.45,751" fill="#00ff00"/>
<polygon points="1102,733.45 1104,735.45 1104,741.4 1102,742.4" fill="#00ff00"/>
<polygon points="1102,743.6 1104,744.6 1104,750.55 1102,752.55" fill="#00ff00"/>
<polygon points="1111,733.45 1109,735.45 1109,741.4 1111,742.4" fill="#00ff00"/>
<polygon points="1111,743.6 1109,744.6 1109,750.55 1111,752.55" fill="#00ff00"/>
<text x="1042" y="820" font-size="12" fill="#000" textLength="71.70" lengthAdjust="spacing" >Intensity [V]</text>
<rect x="1037" y="828" width="80" height="50" fill="#000" />
<polygon points="1066.45,843 1074.55,843 1072.55,845 1068.45,845" fill="#00ff00"/>
<polygon points="1066.45,863 1074.55,863 1072.55,861 1068.45,861" fill="#00ff00"/>
<polygon points="1066,843.45 1068,845.45 1068,851.4 1066,852.4" fill="#00ff00"/>
<polygon points="1066,853.6 1068,854.6 1068,860.55 1066,862.55" fill="#00ff00"/>
<polygon points="1075,843.45 1073,845.45 1073,851.4 1075,852.4" fill="#00ff00"/>
<polygon points="1075,853.6 1073,854.6 1073,860.55 1075,862.55" fill="#00ff00"/>
<rect x="1083" y="861" width="2" height="2" fill="#00ff00" />
<polygon points="1090.45,843 1098.55,843 1096.55,845 1092.45,845" fill="#00ff00"/>
<polygon points="1090.45,863 1098.55,863 1096.55,861 1092.45,861" fill="#00ff00"/>
<polygon points="1090,843.45 1092,845.45 1092,851.4 1090,852.4" fill="#00ff00"/>
<polygon points="1090,853.6 1092,854.6 1092,860.55 1090,862.55" fill="#00ff00"/>
<polygon points="1099,843.45 1097,845.45 1097,851.4 1099,852.4" fill="#00ff00"/>
<polygon points="1099,853.6 1097,854.6 1097,860.55 1099,862.55" fill="#00ff00"/>
<polygon points="1102.45,843 1110.55,843 1108.55,845 1104.45,845" fill="#00ff00"/>
<polygon points="1102.45,863 1110.55,863 1108.55,861 1104.45,861" fill="#00ff00"/>
<polygon points="1102,843.45 1104,845.45 1104,851.4 1102,852.4" fill="#00ff00"/>
<polygon points="1102,853.6 1104,854.6 1104,860.55 1102,862.55" fill="#00ff00"/>
<polygon points="1111,843.45 1109,845.45 1109,851.4 1111,852.4" fill="#00ff00"/>
<polygon points="1111,853.6 1109,854.6 1109,860.55 1111,862.55" fill="#00ff00"/>
<rect x="1160" y="864" width="8" height="1" fill="#000" />
<text x="1155" y="869" font-size="11" text-anchor="end" fill="#000" >0</text>
<rect x="1160" y="816" width="8" height="1" fill="#000" />
<text x="1155" y="821" font-size="11" text-anchor="end" fill="#000" >2</text>
<rect x="1160" y="768" width="8" height="1" fill="#000" />
<text x="1155" y="773" font-size="11" text-anchor="end" fill="#000" >4</text>
<rect x="1160" y="719" width="8" height="1" fill="#000" />
<text x="1155" y="724" font-size="11" text-anchor="end" fill="#000" >6</text>
<rect x="1160" y="671" width="8" height="1" fill="#000" />
<text x="1155" y="676" font-size="11" text-anchor="end" fill="#000" >8</text>
<rect x="1160" y="623" width="8" height="1" fill="#000" />
<text x="1155" y="628" font-size="11" text-anchor="end" fill="#000" >10</text>
<rect x="1168" y="621" width="2" height="244" fill="#a0a0a0" />
<rect x="1168" y="621" width="6" height="2" fill="#a0a0a0" />
<rect x="1170" y="623" width="4" height="242" fill="#ffffff" />
<rect x="1174" y="622" width="1" height="244" fill="#e3e3e3" />
<rect x="1170" y="864" width="4" height="1" fill="#008080" />
<rect x="1179" y="619" width="7" height="249" fill="#c8d0d4" />
<rect x="1180" y="620" width="5" height="247" fill="#90ee90" />
<rect x="1180" y="620" width="5" height="30" fill="#ff0000" />
<rect x="1180" y="840" width="5" height="27" fill="#ff0000" />
<rect x="1215" y="863" width="8" height="1" fill="#000" />
<text x="1210" y="868" font-size="11" text-anchor="end" fill="#000" >0</text>
<rect x="1215" y="815" width="8" height="1" fill="#000" />
<text x="1210" y="820" font-size="11" text-anchor="end" fill="#000" >2</text>
<rect x="1215" y="767" width="8" height="1" fill="#000" />
<text x="1210" y="772" font-size="11" text-anchor="end" fill="#000" >4</text>
<rect x="1215" y="718" width="8" height="1" fill="#000" />
<text x="1210" y="723" font-size="11" text-anchor="end" fill="#000" >6</text>
<rect x="1215" y="670" width="8" height="1" fill="#000" />
<text x="1210" y="675" font-size="11" text-anchor="end" fill="#000" >8</text>
<rect x="1215" y="622" width="8" height="1" fill="#000" />
<text x="1210" y="627" font-size="11" text-anchor="end" fill="#000" >10</text>
<rect x="1223" y="620" width="2" height="244" fill="#a0a0a0" />
<rect x="1223" y="620" width="6" height="2" fill="#a0a0a0" />
<rect x="1225" y="622" width="4" height="242" fill="#ffffff" />
<rect x="1229" y="621" width="1" height="244" fill="#e3e3e3" />
<rect x="1225" y="863" width="4" height="1" fill="#008080" />
<rect x="1231" y="618" width="7" height="249" fill="#c8d0d4" />
<rect x="1232" y="619" width="5" height="247" fill="#90ee90" />
<rect x="1232" y="619" width="5" height="30" fill="#ff0000" />
<rect x="1232" y="839" width="5" height="27" fill="#ff0000" />
<text x="1164" y="939" font-size="13" font-weight="bold" fill="#000" textLength="76.97" lengthAdjust="spacing" >Piezo range</text>
<text x="1193" y="955" font-size="13" font-weight="bold" fill="#000" textLength="20.34" lengthAdjust="spacing" >[V]</text>
<text x="1170" y="882" font-size="12" fill="#000" textLength="7.00" lengthAdjust="spacing" >x</text>
<text x="1224" y="882" font-size="12" fill="#000" textLength="7.00" lengthAdjust="spacing" >y</text>
<text x="0" y="0" font-size="13" font-weight="bold" text-anchor="middle" fill="#000" transform="translate(31,318.5) rotate(-90)" textLength="33.2" lengthAdjust="spacing">y [V]</text>
<text x="0" y="0" font-size="13" font-weight="bold" text-anchor="middle" fill="#000" transform="translate(31,759.5) rotate(-90)" textLength="33.2" lengthAdjust="spacing">y [V]</text>
</svg>
</body></html>
